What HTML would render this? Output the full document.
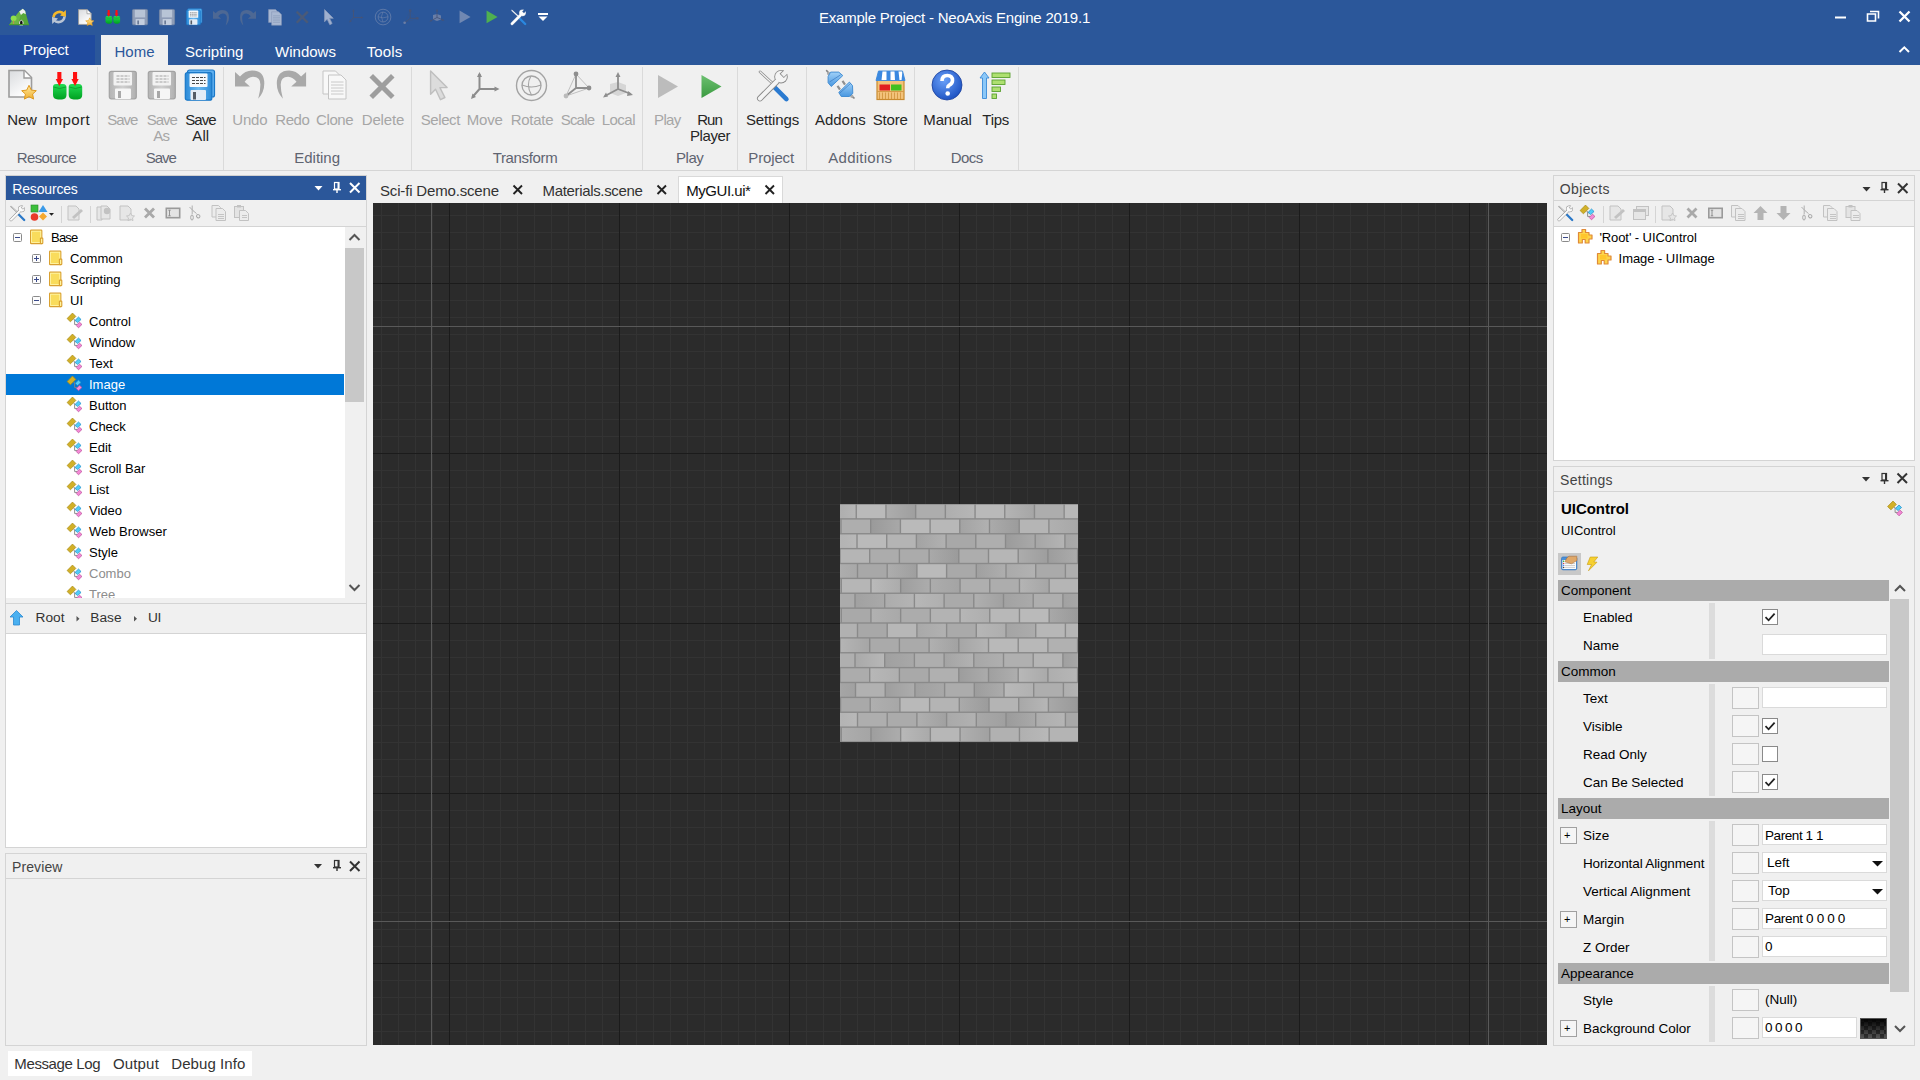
<!DOCTYPE html>
<html><head><meta charset="utf-8"><style>
html,body{margin:0;padding:0;}
body{width:1920px;height:1080px;position:relative;overflow:hidden;background:#f0f0f0;font-family:"Liberation Sans",sans-serif;}
body>div,body>svg{position:absolute;}
.t{white-space:nowrap;}
</style></head><body>
<div style="left:0px;top:0px;width:1920px;height:65px;background:#2b579a;"></div>
<div class="t" style="left:819px;top:8.5px;font-size:15px;line-height:18px;color:#fff;letter-spacing:-0.213px;">Example Project - NeoAxis Engine 2019.1</div>
<div style="left:0px;top:35px;width:95px;height:30px;background:#1f4a9e;"></div>
<div class="t" style="left:23px;top:40.5px;font-size:15px;line-height:18px;color:#fff;letter-spacing:-0.155px;">Project</div>
<div style="left:101px;top:35px;width:67px;height:30px;background:#f0f0f0;"></div>
<div class="t" style="left:114.5px;top:42.5px;font-size:15px;line-height:18px;color:#2b579a;letter-spacing:0.022px;">Home</div>
<div class="t" style="left:185px;top:42.5px;font-size:15px;line-height:18px;color:#fff;letter-spacing:-0.007px;">Scripting</div>
<div class="t" style="left:275px;top:42.5px;font-size:15px;line-height:18px;color:#fff;letter-spacing:0.021px;">Windows</div>
<div class="t" style="left:366.7px;top:42.5px;font-size:15px;line-height:18px;color:#fff;letter-spacing:0.137px;">Tools</div>
<div style="left:0px;top:65px;width:1920px;height:105px;background:#f0f0f0;"></div>
<div style="left:0px;top:170px;width:1920px;height:1px;background:#d5d5d5;"></div>
<div style="left:97px;top:67px;width:1px;height:103px;background:#dadada;"></div>
<div style="left:223px;top:67px;width:1px;height:103px;background:#dadada;"></div>
<div style="left:411px;top:67px;width:1px;height:103px;background:#dadada;"></div>
<div style="left:642px;top:67px;width:1px;height:103px;background:#dadada;"></div>
<div style="left:737px;top:67px;width:1px;height:103px;background:#dadada;"></div>
<div style="left:806px;top:67px;width:1px;height:103px;background:#dadada;"></div>
<div style="left:914px;top:67px;width:1px;height:103px;background:#dadada;"></div>
<div style="left:1018px;top:67px;width:1px;height:103px;background:#dadada;"></div>
<div class="t" style="left:7.3px;top:111.0px;font-size:15px;line-height:18px;color:#262626;letter-spacing:-0.202px;">New</div>
<div class="t" style="left:45px;top:111.0px;font-size:15px;line-height:18px;color:#262626;letter-spacing:0.415px;">Import</div>
<div class="t" style="left:107.3px;top:111.0px;font-size:15px;line-height:18px;color:#a6a6a6;letter-spacing:-1.047px;">Save</div>
<div class="t" style="left:146.7px;top:111.0px;font-size:15px;line-height:18px;color:#a6a6a6;letter-spacing:-1.047px;">Save</div>
<div class="t" style="left:185.3px;top:111.0px;font-size:15px;line-height:18px;color:#262626;letter-spacing:-0.947px;">Save</div>
<div class="t" style="left:232.3px;top:111.0px;font-size:15px;line-height:18px;color:#a6a6a6;letter-spacing:-0.215px;">Undo</div>
<div class="t" style="left:275.3px;top:111.0px;font-size:15px;line-height:18px;color:#a6a6a6;letter-spacing:-0.465px;">Redo</div>
<div class="t" style="left:316px;top:111.0px;font-size:15px;line-height:18px;color:#a6a6a6;letter-spacing:-0.378px;">Clone</div>
<div class="t" style="left:361.7px;top:111.0px;font-size:15px;line-height:18px;color:#a6a6a6;letter-spacing:-0.127px;">Delete</div>
<div class="t" style="left:420.7px;top:111.0px;font-size:15px;line-height:18px;color:#a6a6a6;letter-spacing:-0.398px;">Select</div>
<div class="t" style="left:466.7px;top:111.0px;font-size:15px;line-height:18px;color:#a6a6a6;letter-spacing:-0.170px;">Move</div>
<div class="t" style="left:510.7px;top:111.0px;font-size:15px;line-height:18px;color:#a6a6a6;letter-spacing:-0.266px;">Rotate</div>
<div class="t" style="left:560.7px;top:111.0px;font-size:15px;line-height:18px;color:#a6a6a6;letter-spacing:-0.784px;">Scale</div>
<div class="t" style="left:601.7px;top:111.0px;font-size:15px;line-height:18px;color:#a6a6a6;letter-spacing:-0.512px;">Local</div>
<div class="t" style="left:654px;top:111.0px;font-size:15px;line-height:18px;color:#a6a6a6;letter-spacing:-0.620px;">Play</div>
<div class="t" style="left:697.3px;top:111.0px;font-size:15px;line-height:18px;color:#262626;letter-spacing:-1.039px;">Run</div>
<div class="t" style="left:746px;top:111.0px;font-size:15px;line-height:18px;color:#262626;letter-spacing:-0.150px;">Settings</div>
<div class="t" style="left:815px;top:111.0px;font-size:15px;line-height:18px;color:#262626;letter-spacing:-0.029px;">Addons</div>
<div class="t" style="left:872.7px;top:111.0px;font-size:15px;line-height:18px;color:#262626;letter-spacing:-0.170px;">Store</div>
<div class="t" style="left:923.3px;top:111.0px;font-size:15px;line-height:18px;color:#262626;letter-spacing:-0.133px;">Manual</div>
<div class="t" style="left:982.3px;top:111.0px;font-size:15px;line-height:18px;color:#262626;letter-spacing:-0.270px;">Tips</div>
<div class="t" style="left:153.3px;top:127.0px;font-size:15px;line-height:18px;color:#a6a6a6;letter-spacing:-0.902px;">As</div>
<div class="t" style="left:192.3px;top:127.0px;font-size:15px;line-height:18px;color:#262626;letter-spacing:0.110px;">All</div>
<div class="t" style="left:690px;top:127.0px;font-size:15px;line-height:18px;color:#262626;letter-spacing:-0.420px;">Player</div>
<div class="t" style="left:16.7px;top:148.5px;font-size:15px;line-height:18px;color:#5f6470;letter-spacing:-0.612px;">Resource</div>
<div class="t" style="left:145.7px;top:148.5px;font-size:15px;line-height:18px;color:#5f6470;letter-spacing:-1.047px;">Save</div>
<div class="t" style="left:294.3px;top:148.5px;font-size:15px;line-height:18px;color:#5f6470;letter-spacing:-0.023px;">Editing</div>
<div class="t" style="left:492.7px;top:148.5px;font-size:15px;line-height:18px;color:#5f6470;letter-spacing:-0.354px;">Transform</div>
<div class="t" style="left:676px;top:148.5px;font-size:15px;line-height:18px;color:#5f6470;letter-spacing:-0.470px;">Play</div>
<div class="t" style="left:748.3px;top:148.5px;font-size:15px;line-height:18px;color:#5f6470;letter-spacing:-0.141px;">Project</div>
<div class="t" style="left:828.3px;top:148.5px;font-size:15px;line-height:18px;color:#5f6470;letter-spacing:0.255px;">Additions</div>
<div class="t" style="left:950.7px;top:148.5px;font-size:15px;line-height:18px;color:#5f6470;letter-spacing:-0.544px;">Docs</div>
<div style="left:5px;top:175px;width:362px;height:1px;background:#d0d0d0;"></div>
<div style="left:6px;top:176px;width:360px;height:24px;background:#2b579a;"></div>
<div class="t" style="left:12.3px;top:180.5px;font-size:14px;line-height:17px;color:#fff;letter-spacing:-0.169px;">Resources</div>
<div style="left:5px;top:176px;width:1px;height:672px;background:#d4d4d4;"></div>
<div style="left:366px;top:176px;width:1px;height:672px;background:#d4d4d4;"></div>
<div style="left:6px;top:226px;width:360px;height:1px;background:#d4d4d4;"></div>
<div style="left:6px;top:227px;width:339px;height:371px;background:#fff;"></div>
<div style="left:345px;top:227px;width:21px;height:371px;background:#f0f0f0;"></div>
<div style="left:345px;top:248px;width:19px;height:154px;background:#c8c8c8;"></div>
<div style="left:6px;top:603px;width:360px;height:1px;background:#d4d4d4;"></div>
<div style="left:6px;top:633px;width:360px;height:1px;background:#d4d4d4;"></div>
<div style="left:6px;top:634px;width:360px;height:213px;background:#fff;"></div>
<div style="left:5px;top:847px;width:362px;height:1px;background:#d4d4d4;"></div>
<div style="left:6px;top:374px;width:338px;height:21px;background:#0078d7;"></div>
<div style="left:6px;top:227px;width:339px;height:371px;overflow:hidden;">
<div class="t" style="left:45px;top:2.5px;font-size:13px;line-height:16px;color:#000;letter-spacing:-0.783px;position:absolute;">Base</div>
<div class="t" style="left:64px;top:23.5px;font-size:13px;line-height:16px;color:#000;position:absolute;">Common</div>
<div class="t" style="left:64px;top:44.5px;font-size:13px;line-height:16px;color:#000;position:absolute;">Scripting</div>
<div class="t" style="left:64px;top:65.5px;font-size:13px;line-height:16px;color:#000;position:absolute;">UI</div>
<div class="t" style="left:83px;top:86.5px;font-size:13px;line-height:16px;color:#000;position:absolute;">Control</div>
<div class="t" style="left:83px;top:107.5px;font-size:13px;line-height:16px;color:#000;position:absolute;">Window</div>
<div class="t" style="left:83px;top:128.5px;font-size:13px;line-height:16px;color:#000;position:absolute;">Text</div>
<div class="t" style="left:83px;top:149.5px;font-size:13px;line-height:16px;color:#fff;position:absolute;">Image</div>
<div class="t" style="left:83px;top:170.5px;font-size:13px;line-height:16px;color:#000;position:absolute;">Button</div>
<div class="t" style="left:83px;top:191.5px;font-size:13px;line-height:16px;color:#000;position:absolute;">Check</div>
<div class="t" style="left:83px;top:212.5px;font-size:13px;line-height:16px;color:#000;position:absolute;">Edit</div>
<div class="t" style="left:83px;top:233.5px;font-size:13px;line-height:16px;color:#000;position:absolute;">Scroll Bar</div>
<div class="t" style="left:83px;top:254.5px;font-size:13px;line-height:16px;color:#000;position:absolute;">List</div>
<div class="t" style="left:83px;top:275.5px;font-size:13px;line-height:16px;color:#000;position:absolute;">Video</div>
<div class="t" style="left:83px;top:296.5px;font-size:13px;line-height:16px;color:#000;position:absolute;">Web Browser</div>
<div class="t" style="left:83px;top:317.5px;font-size:13px;line-height:16px;color:#000;position:absolute;">Style</div>
<div class="t" style="left:83px;top:338.5px;font-size:13px;line-height:16px;color:#8d8d8d;position:absolute;">Combo</div>
<div class="t" style="left:83px;top:359.5px;font-size:13px;line-height:16px;color:#8d8d8d;position:absolute;">Tree</div>
</div>
<div class="t" style="left:35.5px;top:610.0px;font-size:13.7px;line-height:16px;color:#333;letter-spacing:0.022px;">Root</div>
<div class="t" style="left:90.3px;top:610.0px;font-size:13.7px;line-height:16px;color:#333;letter-spacing:0.001px;">Base</div>
<div class="t" style="left:148.1px;top:610.0px;font-size:13.7px;line-height:16px;color:#333;letter-spacing:-0.494px;">UI</div>
<div style="left:5px;top:853px;width:362px;height:1px;background:#d4d4d4;"></div>
<div style="left:5px;top:853px;width:1px;height:193px;background:#d4d4d4;"></div>
<div style="left:366px;top:853px;width:1px;height:193px;background:#d4d4d4;"></div>
<div style="left:5px;top:878px;width:362px;height:1px;background:#d4d4d4;"></div>
<div style="left:5px;top:1045px;width:362px;height:1px;background:#d4d4d4;"></div>
<div class="t" style="left:12px;top:858.5px;font-size:14px;line-height:17px;color:#444;letter-spacing:0.101px;">Preview</div>
<div style="left:8px;top:1051px;width:244px;height:25px;background:#fff;"></div>
<div class="t" style="left:14.3px;top:1054.5px;font-size:15px;line-height:18px;color:#333;letter-spacing:-0.378px;">Message Log</div>
<div class="t" style="left:112.9px;top:1054.5px;font-size:15px;line-height:18px;color:#333;letter-spacing:0.178px;">Output</div>
<div class="t" style="left:171.3px;top:1054.5px;font-size:15px;line-height:18px;color:#333;letter-spacing:0.061px;">Debug Info</div>
<div style="left:678px;top:176px;width:105px;height:27px;background:#fff;box-sizing:border-box;border:1px solid #d9d9d9;border-bottom:none;"></div>
<div class="t" style="left:380px;top:181.5px;font-size:15px;line-height:18px;color:#333;letter-spacing:-0.171px;">Sci-fi Demo.scene</div>
<div class="t" style="left:542.5px;top:181.5px;font-size:15px;line-height:18px;color:#333;letter-spacing:-0.336px;">Materials.scene</div>
<div class="t" style="left:686.2px;top:181.5px;font-size:15px;line-height:18px;color:#111;letter-spacing:-0.449px;">MyGUI.ui*</div>
<svg style="left:373px;top:203px;shape-rendering:crispEdges;" width="1174" height="842" viewBox="0 0 1174 842"><rect x="0" y="0" width="1174" height="842" fill="#2b2b2b"/><rect x="8" y="0" width="1" height="842" fill="#333333"/><rect x="25" y="0" width="1" height="842" fill="#333333"/><rect x="42" y="0" width="1" height="842" fill="#333333"/><rect x="59" y="0" width="1" height="842" fill="#333333"/><rect x="76" y="0" width="1" height="842" fill="#333333"/><rect x="93" y="0" width="1" height="842" fill="#333333"/><rect x="110" y="0" width="1" height="842" fill="#333333"/><rect x="127" y="0" width="1" height="842" fill="#333333"/><rect x="144" y="0" width="1" height="842" fill="#333333"/><rect x="161" y="0" width="1" height="842" fill="#333333"/><rect x="178" y="0" width="1" height="842" fill="#333333"/><rect x="195" y="0" width="1" height="842" fill="#333333"/><rect x="212" y="0" width="1" height="842" fill="#333333"/><rect x="229" y="0" width="1" height="842" fill="#333333"/><rect x="246" y="0" width="1" height="842" fill="#333333"/><rect x="263" y="0" width="1" height="842" fill="#333333"/><rect x="280" y="0" width="1" height="842" fill="#333333"/><rect x="297" y="0" width="1" height="842" fill="#333333"/><rect x="314" y="0" width="1" height="842" fill="#333333"/><rect x="331" y="0" width="1" height="842" fill="#333333"/><rect x="348" y="0" width="1" height="842" fill="#333333"/><rect x="365" y="0" width="1" height="842" fill="#333333"/><rect x="382" y="0" width="1" height="842" fill="#333333"/><rect x="399" y="0" width="1" height="842" fill="#333333"/><rect x="416" y="0" width="1" height="842" fill="#333333"/><rect x="433" y="0" width="1" height="842" fill="#333333"/><rect x="450" y="0" width="1" height="842" fill="#333333"/><rect x="467" y="0" width="1" height="842" fill="#333333"/><rect x="484" y="0" width="1" height="842" fill="#333333"/><rect x="501" y="0" width="1" height="842" fill="#333333"/><rect x="518" y="0" width="1" height="842" fill="#333333"/><rect x="535" y="0" width="1" height="842" fill="#333333"/><rect x="552" y="0" width="1" height="842" fill="#333333"/><rect x="569" y="0" width="1" height="842" fill="#333333"/><rect x="586" y="0" width="1" height="842" fill="#333333"/><rect x="603" y="0" width="1" height="842" fill="#333333"/><rect x="620" y="0" width="1" height="842" fill="#333333"/><rect x="637" y="0" width="1" height="842" fill="#333333"/><rect x="654" y="0" width="1" height="842" fill="#333333"/><rect x="671" y="0" width="1" height="842" fill="#333333"/><rect x="688" y="0" width="1" height="842" fill="#333333"/><rect x="705" y="0" width="1" height="842" fill="#333333"/><rect x="722" y="0" width="1" height="842" fill="#333333"/><rect x="739" y="0" width="1" height="842" fill="#333333"/><rect x="756" y="0" width="1" height="842" fill="#333333"/><rect x="773" y="0" width="1" height="842" fill="#333333"/><rect x="790" y="0" width="1" height="842" fill="#333333"/><rect x="807" y="0" width="1" height="842" fill="#333333"/><rect x="824" y="0" width="1" height="842" fill="#333333"/><rect x="841" y="0" width="1" height="842" fill="#333333"/><rect x="858" y="0" width="1" height="842" fill="#333333"/><rect x="875" y="0" width="1" height="842" fill="#333333"/><rect x="892" y="0" width="1" height="842" fill="#333333"/><rect x="909" y="0" width="1" height="842" fill="#333333"/><rect x="926" y="0" width="1" height="842" fill="#333333"/><rect x="943" y="0" width="1" height="842" fill="#333333"/><rect x="960" y="0" width="1" height="842" fill="#333333"/><rect x="977" y="0" width="1" height="842" fill="#333333"/><rect x="994" y="0" width="1" height="842" fill="#333333"/><rect x="1011" y="0" width="1" height="842" fill="#333333"/><rect x="1028" y="0" width="1" height="842" fill="#333333"/><rect x="1045" y="0" width="1" height="842" fill="#333333"/><rect x="1062" y="0" width="1" height="842" fill="#333333"/><rect x="1079" y="0" width="1" height="842" fill="#333333"/><rect x="1096" y="0" width="1" height="842" fill="#333333"/><rect x="1113" y="0" width="1" height="842" fill="#333333"/><rect x="1130" y="0" width="1" height="842" fill="#333333"/><rect x="1147" y="0" width="1" height="842" fill="#333333"/><rect x="1164" y="0" width="1" height="842" fill="#333333"/><rect x="0" y="12" width="1174" height="1" fill="#333333"/><rect x="0" y="29" width="1174" height="1" fill="#333333"/><rect x="0" y="46" width="1174" height="1" fill="#333333"/><rect x="0" y="63" width="1174" height="1" fill="#333333"/><rect x="0" y="80" width="1174" height="1" fill="#333333"/><rect x="0" y="97" width="1174" height="1" fill="#333333"/><rect x="0" y="114" width="1174" height="1" fill="#333333"/><rect x="0" y="131" width="1174" height="1" fill="#333333"/><rect x="0" y="148" width="1174" height="1" fill="#333333"/><rect x="0" y="165" width="1174" height="1" fill="#333333"/><rect x="0" y="182" width="1174" height="1" fill="#333333"/><rect x="0" y="199" width="1174" height="1" fill="#333333"/><rect x="0" y="216" width="1174" height="1" fill="#333333"/><rect x="0" y="233" width="1174" height="1" fill="#333333"/><rect x="0" y="250" width="1174" height="1" fill="#333333"/><rect x="0" y="267" width="1174" height="1" fill="#333333"/><rect x="0" y="284" width="1174" height="1" fill="#333333"/><rect x="0" y="301" width="1174" height="1" fill="#333333"/><rect x="0" y="318" width="1174" height="1" fill="#333333"/><rect x="0" y="335" width="1174" height="1" fill="#333333"/><rect x="0" y="352" width="1174" height="1" fill="#333333"/><rect x="0" y="369" width="1174" height="1" fill="#333333"/><rect x="0" y="386" width="1174" height="1" fill="#333333"/><rect x="0" y="403" width="1174" height="1" fill="#333333"/><rect x="0" y="420" width="1174" height="1" fill="#333333"/><rect x="0" y="437" width="1174" height="1" fill="#333333"/><rect x="0" y="454" width="1174" height="1" fill="#333333"/><rect x="0" y="471" width="1174" height="1" fill="#333333"/><rect x="0" y="488" width="1174" height="1" fill="#333333"/><rect x="0" y="505" width="1174" height="1" fill="#333333"/><rect x="0" y="522" width="1174" height="1" fill="#333333"/><rect x="0" y="539" width="1174" height="1" fill="#333333"/><rect x="0" y="556" width="1174" height="1" fill="#333333"/><rect x="0" y="573" width="1174" height="1" fill="#333333"/><rect x="0" y="590" width="1174" height="1" fill="#333333"/><rect x="0" y="607" width="1174" height="1" fill="#333333"/><rect x="0" y="624" width="1174" height="1" fill="#333333"/><rect x="0" y="641" width="1174" height="1" fill="#333333"/><rect x="0" y="658" width="1174" height="1" fill="#333333"/><rect x="0" y="675" width="1174" height="1" fill="#333333"/><rect x="0" y="692" width="1174" height="1" fill="#333333"/><rect x="0" y="709" width="1174" height="1" fill="#333333"/><rect x="0" y="726" width="1174" height="1" fill="#333333"/><rect x="0" y="743" width="1174" height="1" fill="#333333"/><rect x="0" y="760" width="1174" height="1" fill="#333333"/><rect x="0" y="777" width="1174" height="1" fill="#333333"/><rect x="0" y="794" width="1174" height="1" fill="#333333"/><rect x="0" y="811" width="1174" height="1" fill="#333333"/><rect x="0" y="828" width="1174" height="1" fill="#333333"/><rect x="76" y="0" width="1" height="842" fill="#1b1b1b"/><rect x="246" y="0" width="1" height="842" fill="#1b1b1b"/><rect x="416" y="0" width="1" height="842" fill="#1b1b1b"/><rect x="586" y="0" width="1" height="842" fill="#1b1b1b"/><rect x="756" y="0" width="1" height="842" fill="#1b1b1b"/><rect x="926" y="0" width="1" height="842" fill="#1b1b1b"/><rect x="1096" y="0" width="1" height="842" fill="#1b1b1b"/><rect x="0" y="80" width="1174" height="1" fill="#1b1b1b"/><rect x="0" y="250" width="1174" height="1" fill="#1b1b1b"/><rect x="0" y="420" width="1174" height="1" fill="#1b1b1b"/><rect x="0" y="590" width="1174" height="1" fill="#1b1b1b"/><rect x="0" y="760" width="1174" height="1" fill="#1b1b1b"/><rect x="58" y="0" width="1" height="842" fill="#595959"/><rect x="1115" y="0" width="1" height="842" fill="#595959"/><rect x="0" y="123" width="1174" height="1" fill="#595959"/><rect x="0" y="718" width="1174" height="1" fill="#595959"/></svg>
<svg style="left:840px;top:504px;" width="238" height="238" viewBox="0 0 238 238"><rect x="0" y="0" width="238" height="238" fill="#8a8a8a"/><linearGradient id="bg0_-134"><stop offset="0" stop-color="rgb(168,168,168)"/><stop offset="1" stop-color="rgb(182,182,182)"/></linearGradient><rect x="-12.75" y="0.70" width="28.30" height="13.47" fill="url(#bg0_-134)"/><rect x="16.95" y="0.70" width="28.30" height="13.47" fill="rgb(186,186,186)"/><linearGradient id="bg0_459"><stop offset="0" stop-color="rgb(173,173,173)"/><stop offset="1" stop-color="rgb(159,159,159)"/></linearGradient><rect x="46.65" y="0.70" width="28.30" height="13.47" fill="url(#bg0_459)"/><rect x="76.35" y="0.70" width="28.30" height="13.47" fill="rgb(173,173,173)"/><linearGradient id="bg0_1053"><stop offset="0" stop-color="rgb(174,174,174)"/><stop offset="1" stop-color="rgb(182,182,182)"/></linearGradient><rect x="106.05" y="0.70" width="28.30" height="13.47" fill="url(#bg0_1053)"/><rect x="135.75" y="0.70" width="28.30" height="13.47" fill="rgb(185,185,185)"/><linearGradient id="bg0_1647"><stop offset="0" stop-color="rgb(180,180,180)"/><stop offset="1" stop-color="rgb(166,166,166)"/></linearGradient><rect x="165.45" y="0.70" width="28.30" height="13.47" fill="url(#bg0_1647)"/><rect x="195.15" y="0.70" width="28.30" height="13.47" fill="rgb(173,173,173)"/><rect x="224.85" y="0.70" width="28.30" height="13.47" fill="rgb(184,184,184)"/><rect x="-28.00" y="15.57" width="28.30" height="13.47" fill="rgb(169,169,169)"/><rect x="1.70" y="15.57" width="28.30" height="13.47" fill="rgb(174,174,174)"/><linearGradient id="bg1_307"><stop offset="0" stop-color="rgb(154,154,154)"/><stop offset="1" stop-color="rgb(168,168,168)"/></linearGradient><rect x="31.40" y="15.57" width="28.30" height="13.47" fill="url(#bg1_307)"/><rect x="61.10" y="15.57" width="28.30" height="13.47" fill="rgb(186,186,186)"/><rect x="90.80" y="15.57" width="28.30" height="13.47" fill="rgb(184,184,184)"/><linearGradient id="bg1_1198"><stop offset="0" stop-color="rgb(163,163,163)"/><stop offset="1" stop-color="rgb(177,177,177)"/></linearGradient><rect x="120.50" y="15.57" width="28.30" height="13.47" fill="url(#bg1_1198)"/><linearGradient id="bg1_1495"><stop offset="0" stop-color="rgb(170,170,170)"/><stop offset="1" stop-color="rgb(156,156,156)"/></linearGradient><rect x="150.20" y="15.57" width="28.30" height="13.47" fill="url(#bg1_1495)"/><rect x="179.90" y="15.57" width="28.30" height="13.47" fill="rgb(181,181,181)"/><linearGradient id="bg1_2089"><stop offset="0" stop-color="rgb(176,176,176)"/><stop offset="1" stop-color="rgb(168,168,168)"/></linearGradient><rect x="209.60" y="15.57" width="28.30" height="13.47" fill="url(#bg1_2089)"/><linearGradient id="bg2_-127"><stop offset="0" stop-color="rgb(176,176,176)"/><stop offset="1" stop-color="rgb(184,184,184)"/></linearGradient><rect x="-12.00" y="30.45" width="28.30" height="13.47" fill="url(#bg2_-127)"/><rect x="17.70" y="30.45" width="28.30" height="13.47" fill="rgb(186,186,186)"/><rect x="47.40" y="30.45" width="28.30" height="13.47" fill="rgb(180,180,180)"/><linearGradient id="bg2_764"><stop offset="0" stop-color="rgb(163,163,163)"/><stop offset="1" stop-color="rgb(177,177,177)"/></linearGradient><rect x="77.10" y="30.45" width="28.30" height="13.47" fill="url(#bg2_764)"/><rect x="106.80" y="30.45" width="28.30" height="13.47" fill="rgb(168,168,168)"/><rect x="136.50" y="30.45" width="28.30" height="13.47" fill="rgb(174,174,174)"/><linearGradient id="bg2_1655"><stop offset="0" stop-color="rgb(155,155,155)"/><stop offset="1" stop-color="rgb(169,169,169)"/></linearGradient><rect x="166.20" y="30.45" width="28.30" height="13.47" fill="url(#bg2_1655)"/><linearGradient id="bg2_1952"><stop offset="0" stop-color="rgb(166,166,166)"/><stop offset="1" stop-color="rgb(180,180,180)"/></linearGradient><rect x="195.90" y="30.45" width="28.30" height="13.47" fill="url(#bg2_1952)"/><linearGradient id="bg2_2249"><stop offset="0" stop-color="rgb(166,166,166)"/><stop offset="1" stop-color="rgb(174,174,174)"/></linearGradient><rect x="225.60" y="30.45" width="28.30" height="13.47" fill="url(#bg2_2249)"/><linearGradient id="bg3_-297"><stop offset="0" stop-color="rgb(169,169,169)"/><stop offset="1" stop-color="rgb(177,177,177)"/></linearGradient><rect x="-29.00" y="45.33" width="28.30" height="13.47" fill="url(#bg3_-297)"/><rect x="0.70" y="45.33" width="28.30" height="13.47" fill="rgb(181,181,181)"/><rect x="30.40" y="45.33" width="28.30" height="13.47" fill="rgb(172,172,172)"/><rect x="60.10" y="45.33" width="28.30" height="13.47" fill="rgb(171,171,171)"/><linearGradient id="bg3_891"><stop offset="0" stop-color="rgb(169,169,169)"/><stop offset="1" stop-color="rgb(155,155,155)"/></linearGradient><rect x="89.80" y="45.33" width="28.30" height="13.47" fill="url(#bg3_891)"/><rect x="119.50" y="45.33" width="28.30" height="13.47" fill="rgb(173,173,173)"/><rect x="149.20" y="45.33" width="28.30" height="13.47" fill="rgb(182,182,182)"/><linearGradient id="bg3_1782"><stop offset="0" stop-color="rgb(172,172,172)"/><stop offset="1" stop-color="rgb(158,158,158)"/></linearGradient><rect x="178.90" y="45.33" width="28.30" height="13.47" fill="url(#bg3_1782)"/><linearGradient id="bg3_2079"><stop offset="0" stop-color="rgb(157,157,157)"/><stop offset="1" stop-color="rgb(171,171,171)"/></linearGradient><rect x="208.60" y="45.33" width="28.30" height="13.47" fill="url(#bg3_2079)"/><rect x="238.30" y="45.33" width="28.30" height="13.47" fill="rgb(174,174,174)"/><linearGradient id="bg4_-122"><stop offset="0" stop-color="rgb(176,176,176)"/><stop offset="1" stop-color="rgb(168,168,168)"/></linearGradient><rect x="-11.50" y="60.20" width="28.30" height="13.47" fill="url(#bg4_-122)"/><rect x="18.20" y="60.20" width="28.30" height="13.47" fill="rgb(168,168,168)"/><linearGradient id="bg4_472"><stop offset="0" stop-color="rgb(173,173,173)"/><stop offset="1" stop-color="rgb(159,159,159)"/></linearGradient><rect x="47.90" y="60.20" width="28.30" height="13.47" fill="url(#bg4_472)"/><rect x="77.60" y="60.20" width="28.30" height="13.47" fill="rgb(186,186,186)"/><rect x="107.30" y="60.20" width="28.30" height="13.47" fill="rgb(169,169,169)"/><linearGradient id="bg4_1363"><stop offset="0" stop-color="rgb(160,160,160)"/><stop offset="1" stop-color="rgb(174,174,174)"/></linearGradient><rect x="137.00" y="60.20" width="28.30" height="13.47" fill="url(#bg4_1363)"/><linearGradient id="bg4_1660"><stop offset="0" stop-color="rgb(170,170,170)"/><stop offset="1" stop-color="rgb(178,178,178)"/></linearGradient><rect x="166.70" y="60.20" width="28.30" height="13.47" fill="url(#bg4_1660)"/><rect x="196.40" y="60.20" width="28.30" height="13.47" fill="rgb(170,170,170)"/><rect x="226.10" y="60.20" width="28.30" height="13.47" fill="rgb(174,174,174)"/><linearGradient id="bg5_-284"><stop offset="0" stop-color="rgb(160,160,160)"/><stop offset="1" stop-color="rgb(168,168,168)"/></linearGradient><rect x="-27.75" y="75.08" width="28.30" height="13.47" fill="url(#bg5_-284)"/><rect x="1.95" y="75.08" width="28.30" height="13.47" fill="rgb(182,182,182)"/><linearGradient id="bg5_309"><stop offset="0" stop-color="rgb(186,186,186)"/><stop offset="1" stop-color="rgb(172,172,172)"/></linearGradient><rect x="31.65" y="75.08" width="28.30" height="13.47" fill="url(#bg5_309)"/><linearGradient id="bg5_606"><stop offset="0" stop-color="rgb(158,158,158)"/><stop offset="1" stop-color="rgb(172,172,172)"/></linearGradient><rect x="61.35" y="75.08" width="28.30" height="13.47" fill="url(#bg5_606)"/><linearGradient id="bg5_903"><stop offset="0" stop-color="rgb(172,172,172)"/><stop offset="1" stop-color="rgb(164,164,164)"/></linearGradient><rect x="91.05" y="75.08" width="28.30" height="13.47" fill="url(#bg5_903)"/><rect x="120.75" y="75.08" width="28.30" height="13.47" fill="rgb(175,175,175)"/><rect x="150.45" y="75.08" width="28.30" height="13.47" fill="rgb(173,173,173)"/><linearGradient id="bg5_1794"><stop offset="0" stop-color="rgb(180,180,180)"/><stop offset="1" stop-color="rgb(166,166,166)"/></linearGradient><rect x="180.15" y="75.08" width="28.30" height="13.47" fill="url(#bg5_1794)"/><rect x="209.85" y="75.08" width="28.30" height="13.47" fill="rgb(181,181,181)"/><rect x="-14.00" y="89.95" width="28.30" height="13.47" fill="rgb(171,171,171)"/><linearGradient id="bg6_150"><stop offset="0" stop-color="rgb(161,161,161)"/><stop offset="1" stop-color="rgb(169,169,169)"/></linearGradient><rect x="15.70" y="89.95" width="28.30" height="13.47" fill="url(#bg6_150)"/><linearGradient id="bg6_447"><stop offset="0" stop-color="rgb(172,172,172)"/><stop offset="1" stop-color="rgb(180,180,180)"/></linearGradient><rect x="45.40" y="89.95" width="28.30" height="13.47" fill="url(#bg6_447)"/><linearGradient id="bg6_744"><stop offset="0" stop-color="rgb(183,183,183)"/><stop offset="1" stop-color="rgb(175,175,175)"/></linearGradient><rect x="75.10" y="89.95" width="28.30" height="13.47" fill="url(#bg6_744)"/><rect x="104.80" y="89.95" width="28.30" height="13.47" fill="rgb(170,170,170)"/><linearGradient id="bg6_1338"><stop offset="0" stop-color="rgb(175,175,175)"/><stop offset="1" stop-color="rgb(161,161,161)"/></linearGradient><rect x="134.50" y="89.95" width="28.30" height="13.47" fill="url(#bg6_1338)"/><linearGradient id="bg6_1635"><stop offset="0" stop-color="rgb(162,162,162)"/><stop offset="1" stop-color="rgb(170,170,170)"/></linearGradient><rect x="164.20" y="89.95" width="28.30" height="13.47" fill="url(#bg6_1635)"/><rect x="193.90" y="89.95" width="28.30" height="13.47" fill="rgb(174,174,174)"/><linearGradient id="bg6_2229"><stop offset="0" stop-color="rgb(162,162,162)"/><stop offset="1" stop-color="rgb(170,170,170)"/></linearGradient><rect x="223.60" y="89.95" width="28.30" height="13.47" fill="url(#bg6_2229)"/><rect x="-27.75" y="104.83" width="28.30" height="13.47" fill="rgb(175,175,175)"/><rect x="1.95" y="104.83" width="28.30" height="13.47" fill="rgb(169,169,169)"/><linearGradient id="bg7_309"><stop offset="0" stop-color="rgb(177,177,177)"/><stop offset="1" stop-color="rgb(169,169,169)"/></linearGradient><rect x="31.65" y="104.83" width="28.30" height="13.47" fill="url(#bg7_309)"/><rect x="61.35" y="104.83" width="28.30" height="13.47" fill="rgb(172,172,172)"/><rect x="91.05" y="104.83" width="28.30" height="13.47" fill="rgb(179,179,179)"/><linearGradient id="bg7_1200"><stop offset="0" stop-color="rgb(182,182,182)"/><stop offset="1" stop-color="rgb(174,174,174)"/></linearGradient><rect x="120.75" y="104.83" width="28.30" height="13.47" fill="url(#bg7_1200)"/><rect x="150.45" y="104.83" width="28.30" height="13.47" fill="rgb(184,184,184)"/><rect x="180.15" y="104.83" width="28.30" height="13.47" fill="rgb(186,186,186)"/><linearGradient id="bg7_2091"><stop offset="0" stop-color="rgb(168,168,168)"/><stop offset="1" stop-color="rgb(154,154,154)"/></linearGradient><rect x="209.85" y="104.83" width="28.30" height="13.47" fill="url(#bg7_2091)"/><rect x="-11.50" y="119.70" width="28.30" height="13.47" fill="rgb(177,177,177)"/><rect x="18.20" y="119.70" width="28.30" height="13.47" fill="rgb(168,168,168)"/><rect x="47.90" y="119.70" width="28.30" height="13.47" fill="rgb(183,183,183)"/><linearGradient id="bg8_769"><stop offset="0" stop-color="rgb(169,169,169)"/><stop offset="1" stop-color="rgb(177,177,177)"/></linearGradient><rect x="77.60" y="119.70" width="28.30" height="13.47" fill="url(#bg8_769)"/><rect x="107.30" y="119.70" width="28.30" height="13.47" fill="rgb(170,170,170)"/><linearGradient id="bg8_1363"><stop offset="0" stop-color="rgb(182,182,182)"/><stop offset="1" stop-color="rgb(174,174,174)"/></linearGradient><rect x="137.00" y="119.70" width="28.30" height="13.47" fill="url(#bg8_1363)"/><linearGradient id="bg8_1660"><stop offset="0" stop-color="rgb(164,164,164)"/><stop offset="1" stop-color="rgb(172,172,172)"/></linearGradient><rect x="166.70" y="119.70" width="28.30" height="13.47" fill="url(#bg8_1660)"/><rect x="196.40" y="119.70" width="28.30" height="13.47" fill="rgb(183,183,183)"/><rect x="226.10" y="119.70" width="28.30" height="13.47" fill="rgb(181,181,181)"/><rect x="-29.00" y="134.57" width="28.30" height="13.47" fill="rgb(183,183,183)"/><linearGradient id="bg9_0"><stop offset="0" stop-color="rgb(180,180,180)"/><stop offset="1" stop-color="rgb(166,166,166)"/></linearGradient><rect x="0.70" y="134.57" width="28.30" height="13.47" fill="url(#bg9_0)"/><rect x="30.40" y="134.57" width="28.30" height="13.47" fill="rgb(170,170,170)"/><rect x="60.10" y="134.57" width="28.30" height="13.47" fill="rgb(170,170,170)"/><linearGradient id="bg9_891"><stop offset="0" stop-color="rgb(176,176,176)"/><stop offset="1" stop-color="rgb(162,162,162)"/></linearGradient><rect x="89.80" y="134.57" width="28.30" height="13.47" fill="url(#bg9_891)"/><linearGradient id="bg9_1188"><stop offset="0" stop-color="rgb(166,166,166)"/><stop offset="1" stop-color="rgb(180,180,180)"/></linearGradient><rect x="119.50" y="134.57" width="28.30" height="13.47" fill="url(#bg9_1188)"/><rect x="149.20" y="134.57" width="28.30" height="13.47" fill="rgb(185,185,185)"/><rect x="178.90" y="134.57" width="28.30" height="13.47" fill="rgb(184,184,184)"/><rect x="208.60" y="134.57" width="28.30" height="13.47" fill="rgb(177,177,177)"/><rect x="238.30" y="134.57" width="28.30" height="13.47" fill="rgb(183,183,183)"/><rect x="-14.00" y="149.45" width="28.30" height="13.47" fill="rgb(175,175,175)"/><linearGradient id="bg10_150"><stop offset="0" stop-color="rgb(169,169,169)"/><stop offset="1" stop-color="rgb(183,183,183)"/></linearGradient><rect x="15.70" y="149.45" width="28.30" height="13.47" fill="url(#bg10_150)"/><linearGradient id="bg10_447"><stop offset="0" stop-color="rgb(160,160,160)"/><stop offset="1" stop-color="rgb(168,168,168)"/></linearGradient><rect x="45.40" y="149.45" width="28.30" height="13.47" fill="url(#bg10_447)"/><rect x="75.10" y="149.45" width="28.30" height="13.47" fill="rgb(174,174,174)"/><linearGradient id="bg10_1041"><stop offset="0" stop-color="rgb(164,164,164)"/><stop offset="1" stop-color="rgb(178,178,178)"/></linearGradient><rect x="104.80" y="149.45" width="28.30" height="13.47" fill="url(#bg10_1041)"/><linearGradient id="bg10_1338"><stop offset="0" stop-color="rgb(167,167,167)"/><stop offset="1" stop-color="rgb(175,175,175)"/></linearGradient><rect x="134.50" y="149.45" width="28.30" height="13.47" fill="url(#bg10_1338)"/><rect x="164.20" y="149.45" width="28.30" height="13.47" fill="rgb(176,176,176)"/><rect x="193.90" y="149.45" width="28.30" height="13.47" fill="rgb(181,181,181)"/><linearGradient id="bg10_2229"><stop offset="0" stop-color="rgb(160,160,160)"/><stop offset="1" stop-color="rgb(174,174,174)"/></linearGradient><rect x="223.60" y="149.45" width="28.30" height="13.47" fill="url(#bg10_2229)"/><rect x="-29.00" y="164.32" width="28.30" height="13.47" fill="rgb(178,178,178)"/><rect x="0.70" y="164.32" width="28.30" height="13.47" fill="rgb(172,172,172)"/><linearGradient id="bg11_297"><stop offset="0" stop-color="rgb(183,183,183)"/><stop offset="1" stop-color="rgb(175,175,175)"/></linearGradient><rect x="30.40" y="164.32" width="28.30" height="13.47" fill="url(#bg11_297)"/><rect x="60.10" y="164.32" width="28.30" height="13.47" fill="rgb(169,169,169)"/><rect x="89.80" y="164.32" width="28.30" height="13.47" fill="rgb(176,176,176)"/><linearGradient id="bg11_1188"><stop offset="0" stop-color="rgb(157,157,157)"/><stop offset="1" stop-color="rgb(171,171,171)"/></linearGradient><rect x="119.50" y="164.32" width="28.30" height="13.47" fill="url(#bg11_1188)"/><linearGradient id="bg11_1485"><stop offset="0" stop-color="rgb(160,160,160)"/><stop offset="1" stop-color="rgb(174,174,174)"/></linearGradient><rect x="149.20" y="164.32" width="28.30" height="13.47" fill="url(#bg11_1485)"/><linearGradient id="bg11_1782"><stop offset="0" stop-color="rgb(184,184,184)"/><stop offset="1" stop-color="rgb(170,170,170)"/></linearGradient><rect x="178.90" y="164.32" width="28.30" height="13.47" fill="url(#bg11_1782)"/><linearGradient id="bg11_2079"><stop offset="0" stop-color="rgb(174,174,174)"/><stop offset="1" stop-color="rgb(182,182,182)"/></linearGradient><rect x="208.60" y="164.32" width="28.30" height="13.47" fill="url(#bg11_2079)"/><linearGradient id="bg11_2375"><stop offset="0" stop-color="rgb(169,169,169)"/><stop offset="1" stop-color="rgb(161,161,161)"/></linearGradient><rect x="238.30" y="164.32" width="28.30" height="13.47" fill="url(#bg11_2375)"/><linearGradient id="bg12_-142"><stop offset="0" stop-color="rgb(169,169,169)"/><stop offset="1" stop-color="rgb(161,161,161)"/></linearGradient><rect x="-13.50" y="179.20" width="28.30" height="13.47" fill="url(#bg12_-142)"/><rect x="16.20" y="179.20" width="28.30" height="13.47" fill="rgb(177,177,177)"/><linearGradient id="bg12_452"><stop offset="0" stop-color="rgb(158,158,158)"/><stop offset="1" stop-color="rgb(172,172,172)"/></linearGradient><rect x="45.90" y="179.20" width="28.30" height="13.47" fill="url(#bg12_452)"/><linearGradient id="bg12_749"><stop offset="0" stop-color="rgb(160,160,160)"/><stop offset="1" stop-color="rgb(168,168,168)"/></linearGradient><rect x="75.60" y="179.20" width="28.30" height="13.47" fill="url(#bg12_749)"/><rect x="105.30" y="179.20" width="28.30" height="13.47" fill="rgb(172,172,172)"/><linearGradient id="bg12_1343"><stop offset="0" stop-color="rgb(157,157,157)"/><stop offset="1" stop-color="rgb(171,171,171)"/></linearGradient><rect x="135.00" y="179.20" width="28.30" height="13.47" fill="url(#bg12_1343)"/><linearGradient id="bg12_1640"><stop offset="0" stop-color="rgb(185,185,185)"/><stop offset="1" stop-color="rgb(177,177,177)"/></linearGradient><rect x="164.70" y="179.20" width="28.30" height="13.47" fill="url(#bg12_1640)"/><rect x="194.40" y="179.20" width="28.30" height="13.47" fill="rgb(174,174,174)"/><linearGradient id="bg12_2234"><stop offset="0" stop-color="rgb(175,175,175)"/><stop offset="1" stop-color="rgb(183,183,183)"/></linearGradient><rect x="224.10" y="179.20" width="28.30" height="13.47" fill="url(#bg12_2234)"/><linearGradient id="bg13_-292"><stop offset="0" stop-color="rgb(168,168,168)"/><stop offset="1" stop-color="rgb(154,154,154)"/></linearGradient><rect x="-28.50" y="194.07" width="28.30" height="13.47" fill="url(#bg13_-292)"/><rect x="1.20" y="194.07" width="28.30" height="13.47" fill="rgb(169,169,169)"/><linearGradient id="bg13_302"><stop offset="0" stop-color="rgb(175,175,175)"/><stop offset="1" stop-color="rgb(167,167,167)"/></linearGradient><rect x="30.90" y="194.07" width="28.30" height="13.47" fill="url(#bg13_302)"/><rect x="60.60" y="194.07" width="28.30" height="13.47" fill="rgb(185,185,185)"/><rect x="90.30" y="194.07" width="28.30" height="13.47" fill="rgb(180,180,180)"/><linearGradient id="bg13_1193"><stop offset="0" stop-color="rgb(170,170,170)"/><stop offset="1" stop-color="rgb(156,156,156)"/></linearGradient><rect x="120.00" y="194.07" width="28.30" height="13.47" fill="url(#bg13_1193)"/><rect x="149.70" y="194.07" width="28.30" height="13.47" fill="rgb(180,180,180)"/><linearGradient id="bg13_1787"><stop offset="0" stop-color="rgb(168,168,168)"/><stop offset="1" stop-color="rgb(182,182,182)"/></linearGradient><rect x="179.40" y="194.07" width="28.30" height="13.47" fill="url(#bg13_1787)"/><linearGradient id="bg13_2084"><stop offset="0" stop-color="rgb(168,168,168)"/><stop offset="1" stop-color="rgb(154,154,154)"/></linearGradient><rect x="209.10" y="194.07" width="28.30" height="13.47" fill="url(#bg13_2084)"/><linearGradient id="bg14_-122"><stop offset="0" stop-color="rgb(176,176,176)"/><stop offset="1" stop-color="rgb(184,184,184)"/></linearGradient><rect x="-11.50" y="208.95" width="28.30" height="13.47" fill="url(#bg14_-122)"/><rect x="18.20" y="208.95" width="28.30" height="13.47" fill="rgb(174,174,174)"/><rect x="47.90" y="208.95" width="28.30" height="13.47" fill="rgb(171,171,171)"/><linearGradient id="bg14_769"><stop offset="0" stop-color="rgb(175,175,175)"/><stop offset="1" stop-color="rgb(161,161,161)"/></linearGradient><rect x="77.60" y="208.95" width="28.30" height="13.47" fill="url(#bg14_769)"/><linearGradient id="bg14_1066"><stop offset="0" stop-color="rgb(169,169,169)"/><stop offset="1" stop-color="rgb(177,177,177)"/></linearGradient><rect x="107.30" y="208.95" width="28.30" height="13.47" fill="url(#bg14_1066)"/><linearGradient id="bg14_1363"><stop offset="0" stop-color="rgb(168,168,168)"/><stop offset="1" stop-color="rgb(160,160,160)"/></linearGradient><rect x="137.00" y="208.95" width="28.30" height="13.47" fill="url(#bg14_1363)"/><linearGradient id="bg14_1660"><stop offset="0" stop-color="rgb(155,155,155)"/><stop offset="1" stop-color="rgb(169,169,169)"/></linearGradient><rect x="166.70" y="208.95" width="28.30" height="13.47" fill="url(#bg14_1660)"/><linearGradient id="bg14_1957"><stop offset="0" stop-color="rgb(173,173,173)"/><stop offset="1" stop-color="rgb(181,181,181)"/></linearGradient><rect x="196.40" y="208.95" width="28.30" height="13.47" fill="url(#bg14_1957)"/><rect x="226.10" y="208.95" width="28.30" height="13.47" fill="rgb(168,168,168)"/><linearGradient id="bg15_-284"><stop offset="0" stop-color="rgb(170,170,170)"/><stop offset="1" stop-color="rgb(156,156,156)"/></linearGradient><rect x="-27.75" y="223.82" width="28.30" height="13.47" fill="url(#bg15_-284)"/><linearGradient id="bg15_12"><stop offset="0" stop-color="rgb(173,173,173)"/><stop offset="1" stop-color="rgb(165,165,165)"/></linearGradient><rect x="1.95" y="223.82" width="28.30" height="13.47" fill="url(#bg15_12)"/><linearGradient id="bg15_309"><stop offset="0" stop-color="rgb(158,158,158)"/><stop offset="1" stop-color="rgb(172,172,172)"/></linearGradient><rect x="31.65" y="223.82" width="28.30" height="13.47" fill="url(#bg15_309)"/><linearGradient id="bg15_606"><stop offset="0" stop-color="rgb(184,184,184)"/><stop offset="1" stop-color="rgb(170,170,170)"/></linearGradient><rect x="61.35" y="223.82" width="28.30" height="13.47" fill="url(#bg15_606)"/><rect x="91.05" y="223.82" width="28.30" height="13.47" fill="rgb(183,183,183)"/><linearGradient id="bg15_1200"><stop offset="0" stop-color="rgb(175,175,175)"/><stop offset="1" stop-color="rgb(161,161,161)"/></linearGradient><rect x="120.75" y="223.82" width="28.30" height="13.47" fill="url(#bg15_1200)"/><rect x="150.45" y="223.82" width="28.30" height="13.47" fill="rgb(177,177,177)"/><linearGradient id="bg15_1794"><stop offset="0" stop-color="rgb(176,176,176)"/><stop offset="1" stop-color="rgb(184,184,184)"/></linearGradient><rect x="180.15" y="223.82" width="28.30" height="13.47" fill="url(#bg15_1794)"/><rect x="209.85" y="223.82" width="28.30" height="13.47" fill="rgb(180,180,180)"/></svg>
<div style="left:1553px;top:175px;width:362px;height:1px;background:#d4d4d4;"></div>
<div style="left:1553px;top:176px;width:1px;height:285px;background:#d4d4d4;"></div>
<div style="left:1914px;top:176px;width:1px;height:285px;background:#d4d4d4;"></div>
<div style="left:1554px;top:200px;width:360px;height:1px;background:#d4d4d4;"></div>
<div style="left:1554px;top:226px;width:360px;height:1px;background:#d4d4d4;"></div>
<div style="left:1554px;top:227px;width:360px;height:233px;background:#fff;"></div>
<div style="left:1553px;top:460px;width:362px;height:1px;background:#d4d4d4;"></div>
<div class="t" style="left:1559.8px;top:180.5px;font-size:14px;line-height:17px;color:#444;letter-spacing:0.363px;">Objects</div>
<div class="t" style="left:1599.4px;top:229.5px;font-size:13px;line-height:16px;color:#000;letter-spacing:-0.088px;">&#x27;Root&#x27; - UIControl</div>
<div class="t" style="left:1618.6px;top:250.5px;font-size:13px;line-height:16px;color:#000;letter-spacing:-0.054px;">Image - UIImage</div>
<div style="left:1553px;top:466px;width:362px;height:1px;background:#d4d4d4;"></div>
<div style="left:1553px;top:466px;width:1px;height:580px;background:#d4d4d4;"></div>
<div style="left:1914px;top:466px;width:1px;height:580px;background:#d4d4d4;"></div>
<div style="left:1554px;top:491px;width:360px;height:1px;background:#d4d4d4;"></div>
<div style="left:1553px;top:1045px;width:362px;height:1px;background:#d4d4d4;"></div>
<div class="t" style="left:1560px;top:471.5px;font-size:14px;line-height:17px;color:#444;letter-spacing:0.289px;">Settings</div>
<div class="t" style="left:1561.1px;top:499.7px;font-size:15px;line-height:18px;color:#000;font-weight:700;letter-spacing:-0.058px;">UIControl</div>
<div class="t" style="left:1561px;top:523.0px;font-size:13px;line-height:16px;color:#000;letter-spacing:-0.034px;">UIControl</div>
<div style="left:1558px;top:553px;width:23px;height:22px;background:#c8c8c8;"></div>
<div style="left:1890px;top:580px;width:19px;height:412px;background:#f0f0f0;"></div>
<div style="left:1890px;top:599px;width:19px;height:393px;background:#c8c8c8;"></div>
<div style="left:1558px;top:580px;width:331px;height:21px;background:#ababab;"></div>
<div class="t" style="left:1561px;top:582.5px;font-size:13.5px;line-height:16px;color:#000;">Component</div>
<div style="left:1709px;top:603px;width:6px;height:56px;background:#dcdcdc;"></div>
<div class="t" style="left:1583px;top:609.7px;font-size:13.5px;line-height:16px;color:#000;">Enabled</div>
<div style="left:1762px;top:609px;width:16px;height:16px;background:#fff;box-sizing:border-box;border:1px solid #8a8a8a;"></div>
<svg style="left:1762px;top:609px;" width="16" height="16" viewBox="0 0 16 16"><path d="M3.5 8.2 L6.6 11.3 L12.6 4.6" fill="none" stroke="#222" stroke-width="1.8"/></svg>
<div class="t" style="left:1583px;top:637.7px;font-size:13.5px;line-height:16px;color:#000;">Name</div>
<div style="left:1762px;top:634px;width:125px;height:21px;background:#fff;box-sizing:border-box;border:1px solid #dadada;"></div>
<div style="left:1558px;top:661px;width:331px;height:21px;background:#ababab;"></div>
<div class="t" style="left:1561px;top:663.5px;font-size:13.5px;line-height:16px;color:#000;">Common</div>
<div style="left:1709px;top:684px;width:6px;height:112px;background:#dcdcdc;"></div>
<div class="t" style="left:1583px;top:690.7px;font-size:13.5px;line-height:16px;color:#000;">Text</div>
<div style="left:1732px;top:687px;width:27px;height:22px;background:#f5f5f5;box-sizing:border-box;border:1px solid #c4c4c4;"></div>
<div style="left:1762px;top:687px;width:125px;height:21px;background:#fff;box-sizing:border-box;border:1px solid #dadada;"></div>
<div class="t" style="left:1583px;top:718.7px;font-size:13.5px;line-height:16px;color:#000;">Visible</div>
<div style="left:1732px;top:715px;width:27px;height:22px;background:#f5f5f5;box-sizing:border-box;border:1px solid #c4c4c4;"></div>
<div style="left:1762px;top:718px;width:16px;height:16px;background:#fff;box-sizing:border-box;border:1px solid #8a8a8a;"></div>
<svg style="left:1762px;top:718px;" width="16" height="16" viewBox="0 0 16 16"><path d="M3.5 8.2 L6.6 11.3 L12.6 4.6" fill="none" stroke="#222" stroke-width="1.8"/></svg>
<div class="t" style="left:1583px;top:746.7px;font-size:13.5px;line-height:16px;color:#000;">Read Only</div>
<div style="left:1732px;top:743px;width:27px;height:22px;background:#f5f5f5;box-sizing:border-box;border:1px solid #c4c4c4;"></div>
<div style="left:1762px;top:746px;width:16px;height:16px;background:#fff;box-sizing:border-box;border:1px solid #8a8a8a;"></div>
<div class="t" style="left:1583px;top:774.7px;font-size:13.5px;line-height:16px;color:#000;letter-spacing:-0.061px;">Can Be Selected</div>
<div style="left:1732px;top:771px;width:27px;height:22px;background:#f5f5f5;box-sizing:border-box;border:1px solid #c4c4c4;"></div>
<div style="left:1762px;top:774px;width:16px;height:16px;background:#fff;box-sizing:border-box;border:1px solid #8a8a8a;"></div>
<svg style="left:1762px;top:774px;" width="16" height="16" viewBox="0 0 16 16"><path d="M3.5 8.2 L6.6 11.3 L12.6 4.6" fill="none" stroke="#222" stroke-width="1.8"/></svg>
<div style="left:1558px;top:798px;width:331px;height:21px;background:#ababab;"></div>
<div class="t" style="left:1561px;top:800.5px;font-size:13.5px;line-height:16px;color:#000;">Layout</div>
<div style="left:1709px;top:821px;width:6px;height:140px;background:#dcdcdc;"></div>
<div class="t" style="left:1583px;top:827.7px;font-size:13.5px;line-height:16px;color:#000;">Size</div>
<div style="left:1560px;top:827px;width:17px;height:17px;background:#f5f5f5;box-sizing:border-box;border:1px solid #a0a0a0;"></div>
<div class="t" style="left:1564px;top:828.5px;font-size:11px;line-height:13px;color:#000;font-weight:400;">+</div>
<div style="left:1732px;top:824px;width:27px;height:22px;background:#f5f5f5;box-sizing:border-box;border:1px solid #c4c4c4;"></div>
<div style="left:1762px;top:824px;width:125px;height:21px;background:#fff;box-sizing:border-box;border:1px solid #dadada;"></div>
<div class="t" style="left:1765px;top:827.5px;font-size:13.5px;line-height:16px;color:#000;letter-spacing:-0.429px;">Parent 1 1</div>
<div class="t" style="left:1583px;top:855.7px;font-size:13.5px;line-height:16px;color:#000;letter-spacing:-0.128px;">Horizontal Alignment</div>
<div style="left:1732px;top:852px;width:27px;height:22px;background:#f5f5f5;box-sizing:border-box;border:1px solid #c4c4c4;"></div>
<div style="left:1762px;top:852px;width:125px;height:21px;background:#fff;box-sizing:border-box;border:1px solid #dadada;"></div>
<div class="t" style="left:1767px;top:855.0px;font-size:13.5px;line-height:16px;color:#000;">Left</div>
<svg style="left:1872px;top:861px;" width="11" height="6" viewBox="0 0 11 6"><path d="M0 0 L11 0 L5.5 5.5 Z" fill="#111"/></svg>
<div class="t" style="left:1583px;top:883.7px;font-size:13.5px;line-height:16px;color:#000;">Vertical Alignment</div>
<div style="left:1732px;top:880px;width:27px;height:22px;background:#f5f5f5;box-sizing:border-box;border:1px solid #c4c4c4;"></div>
<div style="left:1762px;top:880px;width:125px;height:21px;background:#fff;box-sizing:border-box;border:1px solid #dadada;"></div>
<div class="t" style="left:1768px;top:883.0px;font-size:13.5px;line-height:16px;color:#000;">Top</div>
<svg style="left:1872px;top:889px;" width="11" height="6" viewBox="0 0 11 6"><path d="M0 0 L11 0 L5.5 5.5 Z" fill="#111"/></svg>
<div class="t" style="left:1583px;top:911.7px;font-size:13.5px;line-height:16px;color:#000;">Margin</div>
<div style="left:1560px;top:911px;width:17px;height:17px;background:#f5f5f5;box-sizing:border-box;border:1px solid #a0a0a0;"></div>
<div class="t" style="left:1564px;top:912.5px;font-size:11px;line-height:13px;color:#000;font-weight:400;">+</div>
<div style="left:1732px;top:908px;width:27px;height:22px;background:#f5f5f5;box-sizing:border-box;border:1px solid #c4c4c4;"></div>
<div style="left:1762px;top:908px;width:125px;height:21px;background:#fff;box-sizing:border-box;border:1px solid #dadada;"></div>
<div class="t" style="left:1765px;top:911.0px;font-size:13.5px;line-height:16px;color:#000;letter-spacing:-0.344px;">Parent 0 0 0 0</div>
<div class="t" style="left:1583px;top:939.7px;font-size:13.5px;line-height:16px;color:#000;">Z Order</div>
<div style="left:1732px;top:936px;width:27px;height:22px;background:#f5f5f5;box-sizing:border-box;border:1px solid #c4c4c4;"></div>
<div style="left:1762px;top:936px;width:125px;height:21px;background:#fff;box-sizing:border-box;border:1px solid #dadada;"></div>
<div class="t" style="left:1765px;top:939.0px;font-size:13.5px;line-height:16px;color:#000;">0</div>
<div style="left:1558px;top:963px;width:331px;height:21px;background:#ababab;"></div>
<div class="t" style="left:1561px;top:965.5px;font-size:13.5px;line-height:16px;color:#000;">Appearance</div>
<div style="left:1709px;top:986px;width:6px;height:56px;background:#dcdcdc;"></div>
<div class="t" style="left:1583px;top:992.7px;font-size:13.5px;line-height:16px;color:#000;">Style</div>
<div style="left:1732px;top:989px;width:27px;height:22px;background:#f5f5f5;box-sizing:border-box;border:1px solid #c4c4c4;"></div>
<div class="t" style="left:1765px;top:992.0px;font-size:13.5px;line-height:16px;color:#000;">(Null)</div>
<div class="t" style="left:1583px;top:1020.7px;font-size:13.5px;line-height:16px;color:#000;letter-spacing:-0.029px;">Background Color</div>
<div style="left:1560px;top:1020px;width:17px;height:17px;background:#f5f5f5;box-sizing:border-box;border:1px solid #a0a0a0;"></div>
<div class="t" style="left:1564px;top:1021.5px;font-size:11px;line-height:13px;color:#000;font-weight:400;">+</div>
<div style="left:1732px;top:1017px;width:27px;height:22px;background:#f5f5f5;box-sizing:border-box;border:1px solid #c4c4c4;"></div>
<div style="left:1762px;top:1017px;width:95px;height:21px;background:#fff;box-sizing:border-box;border:1px solid #dadada;"></div>
<div class="t" style="left:1765px;top:1020.0px;font-size:13.5px;line-height:16px;color:#000;letter-spacing:-0.612px;">0 0 0 0</div>
<svg style="left:1860px;top:1018px;" width="27" height="21" viewBox="0 0 27 21"><rect width="27" height="21" fill="#3c3c3c"/><rect x="0" y="0" width="4" height="4" fill="#6a6a6a"/><rect x="0" y="8" width="4" height="4" fill="#6a6a6a"/><rect x="0" y="16" width="4" height="4" fill="#6a6a6a"/><rect x="4" y="4" width="4" height="4" fill="#6a6a6a"/><rect x="4" y="12" width="4" height="4" fill="#6a6a6a"/><rect x="4" y="20" width="4" height="4" fill="#6a6a6a"/><rect x="8" y="0" width="4" height="4" fill="#6a6a6a"/><rect x="8" y="8" width="4" height="4" fill="#6a6a6a"/><rect x="8" y="16" width="4" height="4" fill="#6a6a6a"/><rect x="12" y="4" width="4" height="4" fill="#6a6a6a"/><rect x="12" y="12" width="4" height="4" fill="#6a6a6a"/><rect x="12" y="20" width="4" height="4" fill="#6a6a6a"/><rect x="16" y="0" width="4" height="4" fill="#6a6a6a"/><rect x="16" y="8" width="4" height="4" fill="#6a6a6a"/><rect x="16" y="16" width="4" height="4" fill="#6a6a6a"/><rect x="20" y="4" width="4" height="4" fill="#6a6a6a"/><rect x="20" y="12" width="4" height="4" fill="#6a6a6a"/><rect x="20" y="20" width="4" height="4" fill="#6a6a6a"/><rect x="24" y="0" width="4" height="4" fill="#6a6a6a"/><rect x="24" y="8" width="4" height="4" fill="#6a6a6a"/><rect x="24" y="16" width="4" height="4" fill="#6a6a6a"/><rect width="27" height="21" fill="url(#gSw2)"/><defs><linearGradient id="gSw2" x1="0" y1="0" x2="0" y2="1"><stop offset="0" stop-color="#000" stop-opacity="1"/><stop offset="1" stop-color="#000" stop-opacity="0.15"/></linearGradient></defs><rect x="0.5" y="0.5" width="26" height="20" fill="none" stroke="#555"/></svg>
<svg style="left:0;top:0;" width="1920" height="1080" viewBox="0 0 1920 1080"><defs>
<linearGradient id="gPage" x1="0" y1="0" x2="0.6" y2="1"><stop offset="0" stop-color="#d9dbde"/><stop offset="1" stop-color="#ffffff"/></linearGradient>
<linearGradient id="gStar" x1="0" y1="0" x2="0" y2="1"><stop offset="0" stop-color="#ffe9a0"/><stop offset="1" stop-color="#f0b030"/></linearGradient>
<linearGradient id="gCube" x1="0" y1="0" x2="0" y2="1"><stop offset="0" stop-color="#22dd55"/><stop offset="1" stop-color="#00a020"/></linearGradient>
<linearGradient id="gFlop" x1="0" y1="0" x2="1" y2="0"><stop offset="0" stop-color="#b4b4b4"/><stop offset="0.5" stop-color="#cfcfcf"/><stop offset="1" stop-color="#b0b0b0"/></linearGradient>
<linearGradient id="gFlopB" x1="0" y1="0" x2="1" y2="0"><stop offset="0" stop-color="#2a8ad8"/><stop offset="0.5" stop-color="#6ab8f0"/><stop offset="1" stop-color="#2a8ad8"/></linearGradient>
<linearGradient id="gGreen" x1="0" y1="0" x2="0" y2="1"><stop offset="0" stop-color="#6cc070"/><stop offset="1" stop-color="#3a9a40"/></linearGradient>
<radialGradient id="gHelp" cx="0.4" cy="0.35" r="0.7"><stop offset="0" stop-color="#6aa0f8"/><stop offset="1" stop-color="#1a4fc0"/></radialGradient>
<linearGradient id="gPlug" x1="0" y1="0" x2="0" y2="1"><stop offset="0" stop-color="#9fd0f8"/><stop offset="1" stop-color="#4a98e0"/></linearGradient>
<pattern id="pChk" width="8" height="8" patternUnits="userSpaceOnUse"><rect width="8" height="8" fill="#3a3a3a"/><rect width="4" height="4" fill="#555"/><rect x="4" y="4" width="4" height="4" fill="#555"/></pattern>
<linearGradient id="gSw" x1="0" y1="0" x2="0" y2="1"><stop offset="0" stop-color="#000" stop-opacity="1"/><stop offset="1" stop-color="#000" stop-opacity="0.2"/></linearGradient>
<clipPath id="cTree"><rect x="6" y="227" width="339" height="371"/></clipPath>
</defs><path d="M9 25 L16 15.5 L19.5 11 L22.8 8.8 L25.2 11 L29 25 Z" fill="#58a838"/><path d="M9 25 L16 15.5 L19.5 11 L21 14 L18 25 Z" fill="#78c050" opacity="0.6"/><path d="M19.3 11.6 L22.8 8.8 L25.2 11 L25.8 14.2 L23.3 13 L21 15 Z" fill="#f0f0f0"/><path d="M19.6 25 V21.5 Q21.3 19 23 21.5 V25 Z" fill="#111" stroke="#e8e8e8" stroke-width="0.9"/><circle cx="13.6" cy="18.3" r="2.9" fill="#8ee04a"/><rect x="13.1" y="20.5" width="1" height="4" fill="#c09050"/><rect x="9" y="24" width="20" height="1.2" fill="#4a9a30"/><g transform="translate(51 9) scale(1)"><path d="M2.5 8.5 A6 6 0 0 1 13 5" fill="none" stroke="#f4b82a" stroke-width="2.6"/><path d="M14.8 1 L15 8 L9 6.5 Z" fill="#f4b82a"/><path d="M13.5 7.5 A6 6 0 0 1 3 11" fill="none" stroke="#b8c4d4" stroke-width="2.6"/><path d="M1.2 15 L1 8 L7 9.5 Z" fill="#b8c4d4"/></g><g transform="translate(78 9) scale(0.56)"><path d="M1 1 H16.5 L23.5 8 V27.5 H1 Z" fill="url(#gPage)" stroke="#9c9c9c" stroke-width="1.6"/><path d="M16 1.5 V8.5 H23" fill="#fff" stroke="#9c9c9c" stroke-width="1.4"/><path d="M21 15.8 L23.3 20.6 L28.3 21.2 L24.6 24.6 L25.6 29.6 L21 27.1 L16.4 29.6 L17.4 24.6 L13.7 21.2 L18.7 20.6 Z" fill="url(#gStar)" stroke="#e09a20" stroke-width="1"/></g><g transform="translate(105 9.5) scale(0.5)"><g transform="translate(0 0)"><path d="M1 16 Q1 13 4 13 L11 13 Q14.5 13 14.5 16.5 L14.5 24 Q14.5 28 10 28.5 L6 28.5 Q1 28 1 24 Z" fill="url(#gCube)"/><path d="M1.5 16 Q7.5 19 14 16" fill="none" stroke="#0a9a2a" stroke-width="0.8"/><path d="M5.3 1 H9.4 V8 H11 L7.35 15 L3.7 8 H5.3 Z" fill="#ff1010"/></g><g transform="translate(15.7 0)"><path d="M1 16 Q1 13 4 13 L11 13 Q14.5 13 14.5 16.5 L14.5 24 Q14.5 28 10 28.5 L6 28.5 Q1 28 1 24 Z" fill="url(#gCube)"/><path d="M1.5 16 Q7.5 19 14 16" fill="none" stroke="#0a9a2a" stroke-width="0.8"/><path d="M5.3 1 H9.4 V8 H11 L7.35 15 L3.7 8 H5.3 Z" fill="#ff1010"/></g></g><g transform="translate(132 9) scale(0.56)"><rect x="0.8" y="0.8" width="27" height="27.5" rx="2" fill="#8e9cb6" stroke="#7a8aa6" stroke-width="1.2"/><rect x="5" y="1.5" width="18.5" height="13.5" fill="#b8c4d6"/><rect x="6.5" y="18" width="16" height="10.5" fill="#c4cede"/><rect x="9.5" y="20.5" width="3" height="7" fill="#6a7a96"/></g><g transform="translate(159 9) scale(0.56)"><rect x="0.8" y="0.8" width="27" height="27.5" rx="2" fill="#8e9cb6" stroke="#7a8aa6" stroke-width="1.2"/><rect x="5" y="1.5" width="18.5" height="13.5" fill="#b8c4d6"/><rect x="6.5" y="18" width="16" height="10.5" fill="#c4cede"/><rect x="9.5" y="20.5" width="3" height="7" fill="#6a7a96"/></g><g transform="translate(186 8.5) scale(0.53)"><rect x="3" y="0.5" width="27" height="27" rx="2" fill="#5fb0f0" stroke="#1a78c8" stroke-width="1.2"/><rect x="0.8" y="3.2" width="26.5" height="27.5" rx="2" fill="url(#gFlopB)" stroke="#1a78c8" stroke-width="1.2"/><rect x="5" y="4" width="18" height="13.5" rx="1" fill="#f4f8fc"/><path d="M7.5 8 H21 M7.5 11 H21 M7.5 14 H21" stroke="#333" stroke-width="0.9" stroke-dasharray="3 1"/><rect x="6" y="20.5" width="15.5" height="10" rx="1" fill="#e4ecf6"/><rect x="8.5" y="22.5" width="3" height="7.5" fill="#555c66"/></g><g transform="translate(213 10) scale(0.546)"><path d="M0 1.7 L0 16.2 L14.9 16.2 L9.6 11.3 Q13 6.6 18 6.3 Q25.4 6.6 25.4 14 Q25.4 20.6 23.2 28.4 Q29.3 21.6 29.3 13.1 Q29.3 0.1 17 0 Q10 0 5 6.1 Z" fill="#4d6894"/></g><g transform="translate(240 10) scale(0.546)"><g transform="translate(29.3 0) scale(-1 1)"><path d="M0 1.7 L0 16.2 L14.9 16.2 L9.6 11.3 Q13 6.6 18 6.3 Q25.4 6.6 25.4 14 Q25.4 20.6 23.2 28.4 Q29.3 21.6 29.3 13.1 Q29.3 0.1 17 0 Q10 0 5 6.1 Z" fill="#4d6894"/></g></g><g transform="translate(268 9) scale(0.56)"><path d="M1 1 H13.5 L17 4.5 V24 H1 Z" fill="#a9b8d2" stroke="#8495b5" stroke-width="1"/><path d="M6.5 5 H19 L24 10 V29 H6.5 Z" fill="#a9b8d2" stroke="#8495b5" stroke-width="1"/><path d="M9 12 H21.5 M9 15 H21.5 M9 18 H21.5 M9 21 H21.5 M9 24 H21.5" stroke="#8495b5" stroke-width="0.9"/></g><g transform="translate(296 11) scale(0.52)"><path d="M3 3 L21 21 M21 3 L3 21" stroke="#4a5a78" stroke-width="4.6" stroke-linecap="square"/></g><g transform="translate(324 9) scale(0.58)"><path d="M1 1 L1 22 L5.5 17.5 L10 27 L14 25 L9.5 16 L16 16 Z" fill="#9fb0cf" stroke="#8a9cbd" stroke-width="1.3" stroke-linejoin="round"/></g><g transform="translate(349 9) scale(0.5)"><path d="M9 2 V17 M9 17 H26 M9 17 L2 25" fill="none" stroke="#43547a" stroke-width="2"/><path d="M9 0 L6.5 5 H11.5 Z M29 17 L24 14.5 V19.5 Z M0.5 27 L2 21.5 L5.5 25 Z" fill="#43547a"/></g><g transform="translate(375 9) scale(0.52)"><circle cx="15.5" cy="15.5" r="15" fill="none" stroke="#6e84ad" stroke-width="1.4"/><circle cx="15.5" cy="15.5" r="9.5" fill="none" stroke="#6e84ad" stroke-width="1.3"/><path d="M15 6 Q9.5 15 15.5 25 M6 15 Q15.5 19 25 15" fill="none" stroke="#6e84ad" stroke-width="1.1"/></g><g transform="translate(403 9) scale(0.55)"><path d="M13 3 V17 H26 M13 17 L3 25" fill="none" stroke="#43547a" stroke-width="1.8"/><path d="M13 3 L26 17 L3 25 Z" fill="none" stroke="#43547a" stroke-width="0.5"/><circle cx="13" cy="3" r="2.4" fill="#43547a"/><circle cx="26" cy="17" r="2.4" fill="#43547a"/><circle cx="3" cy="25" r="2.4" fill="#6a7ea6"/></g><g transform="translate(429 9) scale(0.5)"><path d="M8 12 L16 10 L24 13 L24 21 L16 24 L8 21 Z" fill="#6a7ea6"/><path d="M16 2 V17 M16 17 L29 22 M16 17 L3 24" fill="none" stroke="#43547a" stroke-width="1.8"/><path d="M16 0 L13.5 5 H18.5 Z M31 23 L26 19 L25 24 Z M1 25.5 L4 20.5 L6 24.5 Z" fill="#43547a"/></g><g transform="translate(459 10) scale(0.55)"><path d="M1 1 L21 12.5 L1 24 Z" fill="#7088b2"/></g><g transform="translate(486 10) scale(0.55)"><path d="M1 1 L21 12.5 L1 24 Z" fill="#4fb050"/></g><g transform="translate(510 9) scale(0.5)"><path d="M4 2.8 L16.5 14.3" fill="none" stroke="#c8d0dc" stroke-width="2.6" stroke-linecap="round"/><path d="M4 2.8 L16.5 14.3" fill="none" stroke="#ffffff" stroke-width="1.2" stroke-linecap="round"/><path d="M18.4 18.1 L30.4 30.1" stroke="#2a88e0" stroke-width="4.6" stroke-linecap="round"/><path d="M4 29.4 L20.5 12.8" stroke="#c8d0dc" stroke-width="6" stroke-linecap="round"/><circle cx="25" cy="7.7" r="6.8" fill="#c8d0dc"/><path d="M4 29.4 L20.5 12.8" stroke="#ffffff" stroke-width="4.2" stroke-linecap="round"/><circle cx="25" cy="7.7" r="5.9" fill="#ffffff"/><g transform="rotate(-45 25 7.7)"><rect x="26" y="4.7" width="5" height="6" fill="#c8d0dc"/><rect x="26.9" y="5.5" width="8" height="4.4" fill="#2b579a"/></g></g><rect x="538" y="13" width="10" height="2" fill="#fff"/><path d="M538.5 16.5 H547.5 L543 21 Z" fill="#fff"/><rect x="1835" y="16.5" width="11" height="2" fill="#fff"/><path d="M1870 11.5 H1878.5 V18.5 M1867.5 14 H1875.5 V21 H1867.5 Z" fill="none" stroke="#fff" stroke-width="1.6"/><path d="M1899.5 11.5 L1909.5 21.5 M1909.5 11.5 L1899.5 21.5" stroke="#fff" stroke-width="2.3"/><path d="M1899.5 52 L1904.3 47.3 L1909 52" fill="none" stroke="#fff" stroke-width="2"/><g transform="translate(8 69.5) scale(1.0)"><path d="M1 1 H16.5 L23.5 8 V27.5 H1 Z" fill="url(#gPage)" stroke="#9c9c9c" stroke-width="1.6"/><path d="M16 1.5 V8.5 H23" fill="#fff" stroke="#9c9c9c" stroke-width="1.4"/><path d="M21 15.8 L23.3 20.6 L28.3 21.2 L24.6 24.6 L25.6 29.6 L21 27.1 L16.4 29.6 L17.4 24.6 L13.7 21.2 L18.7 20.6 Z" fill="url(#gStar)" stroke="#e09a20" stroke-width="1"/></g><g transform="translate(52 71) scale(1.0)"><g transform="translate(0 0)"><path d="M1 16 Q1 13 4 13 L11 13 Q14.5 13 14.5 16.5 L14.5 24 Q14.5 28 10 28.5 L6 28.5 Q1 28 1 24 Z" fill="url(#gCube)"/><path d="M1.5 16 Q7.5 19 14 16" fill="none" stroke="#0a9a2a" stroke-width="0.8"/><path d="M5.3 1 H9.4 V8 H11 L7.35 15 L3.7 8 H5.3 Z" fill="#ff1010"/></g><g transform="translate(15.7 0)"><path d="M1 16 Q1 13 4 13 L11 13 Q14.5 13 14.5 16.5 L14.5 24 Q14.5 28 10 28.5 L6 28.5 Q1 28 1 24 Z" fill="url(#gCube)"/><path d="M1.5 16 Q7.5 19 14 16" fill="none" stroke="#0a9a2a" stroke-width="0.8"/><path d="M5.3 1 H9.4 V8 H11 L7.35 15 L3.7 8 H5.3 Z" fill="#ff1010"/></g></g><g transform="translate(108.5 70.5) scale(1.0)"><rect x="0.8" y="0.8" width="27" height="27.5" rx="2" fill="url(#gFlop)" stroke="#a3a3a3" stroke-width="1.2"/><rect x="5" y="1.5" width="18.5" height="13.5" rx="1" fill="#f2f2f2"/><path d="M8 5.5 H21 M8 8.5 H21 M8 11.5 H21" stroke="#999" stroke-width="0.9" stroke-dasharray="3 1"/><rect x="6.5" y="18" width="16" height="10.5" rx="1" fill="#f6f6f6"/><rect x="9.5" y="20.5" width="3" height="7" fill="#a8a8a8"/></g><g transform="translate(147.5 70.5) scale(1.0)"><rect x="0.8" y="0.8" width="27" height="27.5" rx="2" fill="url(#gFlop)" stroke="#a3a3a3" stroke-width="1.2"/><rect x="5" y="1.5" width="18.5" height="13.5" rx="1" fill="#f2f2f2"/><path d="M8 5.5 H21 M8 8.5 H21 M8 11.5 H21" stroke="#999" stroke-width="0.9" stroke-dasharray="3 1"/><rect x="6.5" y="18" width="16" height="10.5" rx="1" fill="#f6f6f6"/><rect x="9.5" y="20.5" width="3" height="7" fill="#a8a8a8"/></g><g transform="translate(184.5 69.5) scale(1.0)"><rect x="3" y="0.5" width="27" height="27" rx="2" fill="#5fb0f0" stroke="#1a78c8" stroke-width="1.2"/><rect x="0.8" y="3.2" width="26.5" height="27.5" rx="2" fill="url(#gFlopB)" stroke="#1a78c8" stroke-width="1.2"/><rect x="5" y="4" width="18" height="13.5" rx="1" fill="#f4f8fc"/><path d="M7.5 8 H21 M7.5 11 H21 M7.5 14 H21" stroke="#333" stroke-width="0.9" stroke-dasharray="3 1"/><rect x="6" y="20.5" width="15.5" height="10" rx="1" fill="#e4ecf6"/><rect x="8.5" y="22.5" width="3" height="7.5" fill="#555c66"/></g><g transform="translate(235 70.4) scale(1.0)"><path d="M0 1.7 L0 16.2 L14.9 16.2 L9.6 11.3 Q13 6.6 18 6.3 Q25.4 6.6 25.4 14 Q25.4 20.6 23.2 28.4 Q29.3 21.6 29.3 13.1 Q29.3 0.1 17 0 Q10 0 5 6.1 Z" fill="#a9a9a9"/></g><g transform="translate(276.8 70.4) scale(1.0)"><g transform="translate(29.3 0) scale(-1 1)"><path d="M0 1.7 L0 16.2 L14.9 16.2 L9.6 11.3 Q13 6.6 18 6.3 Q25.4 6.6 25.4 14 Q25.4 20.6 23.2 28.4 Q29.3 21.6 29.3 13.1 Q29.3 0.1 17 0 Q10 0 5 6.1 Z" fill="#a9a9a9"/></g></g><g transform="translate(322 70) scale(1.0)"><path d="M1 1 H13.5 L17 4.5 V24 H1 Z" fill="#f8f8f8" stroke="#c4c4c4" stroke-width="1"/><path d="M6.5 5 H19 L24 10 V29 H6.5 Z" fill="#f8f8f8" stroke="#c4c4c4" stroke-width="1"/><path d="M9 12 H21.5 M9 15 H21.5 M9 18 H21.5 M9 21 H21.5 M9 24 H21.5" stroke="#c4c4c4" stroke-width="0.9"/></g><g transform="translate(370 74.5) scale(1.0)"><path d="M3 3 L21 21 M21 3 L3 21" stroke="#9e9e9e" stroke-width="5" stroke-linecap="square"/></g><g transform="translate(429.5 70) scale(1.1)"><path d="M1 1 L1 22 L5.5 17.5 L10 27 L14 25 L9.5 16 L16 16 Z" fill="#dcdcdc" stroke="#bfbfbf" stroke-width="1.3" stroke-linejoin="round"/></g><g transform="translate(470.5 72) scale(1.0)"><path d="M9 2 V17 M9 17 H26 M9 17 L2 25" fill="none" stroke="#8c8c8c" stroke-width="2"/><path d="M9 0 L6.5 5 H11.5 Z M29 17 L24 14.5 V19.5 Z M0.5 27 L2 21.5 L5.5 25 Z" fill="#8c8c8c"/></g><g transform="translate(516 70) scale(1.0)"><circle cx="15.5" cy="15.5" r="15" fill="none" stroke="#a4a4a4" stroke-width="1.4"/><circle cx="15.5" cy="15.5" r="9.5" fill="none" stroke="#a4a4a4" stroke-width="1.3"/><path d="M15 6 Q9.5 15 15.5 25 M6 15 Q15.5 19 25 15" fill="none" stroke="#a4a4a4" stroke-width="1.1"/></g><g transform="translate(563 71) scale(1.0)"><path d="M13 3 V17 H26 M13 17 L3 25" fill="none" stroke="#8e8e8e" stroke-width="1.8"/><path d="M13 3 L26 17 L3 25 Z" fill="none" stroke="#8e8e8e" stroke-width="0.5"/><circle cx="13" cy="3" r="2.4" fill="#8e8e8e"/><circle cx="26" cy="17" r="2.4" fill="#8e8e8e"/><circle cx="3" cy="25" r="2.4" fill="#bbb"/></g><g transform="translate(602 72) scale(1.0)"><path d="M8 12 L16 10 L24 13 L24 21 L16 24 L8 21 Z" fill="#d6d6d6"/><path d="M16 2 V17 M16 17 L29 22 M16 17 L3 24" fill="none" stroke="#8e8e8e" stroke-width="1.8"/><path d="M16 0 L13.5 5 H18.5 Z M31 23 L26 19 L25 24 Z M1 25.5 L4 20.5 L6 24.5 Z" fill="#8e8e8e"/></g><g transform="translate(657 74) scale(1.0)"><path d="M1 1 L21 12.5 L1 24 Z" fill="#bcbcbc"/></g><g transform="translate(700.5 74) scale(1.0)"><path d="M1 1 L21 12.5 L1 24 Z" fill="url(#gGreen)"/></g><g transform="translate(756 69) scale(1.0)"><path d="M4 2.8 L16.5 14.3" fill="none" stroke="#8a8a8a" stroke-width="2.6" stroke-linecap="round"/><path d="M4 2.8 L16.5 14.3" fill="none" stroke="#f4f4f4" stroke-width="1.2" stroke-linecap="round"/><path d="M18.4 18.1 L30.4 30.1" stroke="#2a7ad0" stroke-width="4.6" stroke-linecap="round"/><path d="M4 29.4 L20.5 12.8" stroke="#8a8a8a" stroke-width="6" stroke-linecap="round"/><circle cx="25" cy="7.7" r="6.8" fill="#8a8a8a"/><path d="M4 29.4 L20.5 12.8" stroke="#f4f4f4" stroke-width="4.2" stroke-linecap="round"/><circle cx="25" cy="7.7" r="5.9" fill="#f4f4f4"/><g transform="rotate(-45 25 7.7)"><rect x="26" y="4.7" width="5" height="6" fill="#8a8a8a"/><rect x="26.9" y="5.5" width="8" height="4.4" fill="#f0f0f0"/></g></g><path d="M826.6 70.6 L829 73.2 M851.9 96.5 L854 98" stroke="#888" stroke-width="1.6" stroke-linecap="round"/><circle cx="828.6" cy="73.4" r="1.6" fill="#aaa"/><circle cx="851.8" cy="96.2" r="1.6" fill="#aaa"/><path d="M842.5 80.9 L845 84.6 M837.5 85.9 L840 89.6" stroke="#909090" stroke-width="2.2"/><path d="M828.1 76.5 L830.6 72.1 L838.75 72.1 L842.8 75.6 L831.25 86.5 L828.1 82.75 Z" fill="url(#gPlug)" stroke="#3a88d0" stroke-width="0.9"/><path d="M829.5 82 L840.5 74.9" stroke="#3a78c0" stroke-width="0.7"/><path d="M838.75 92.4 L849.4 82.1 L852.5 85.6 L852.8 93.4 L849.4 96.5 L841.25 96.5 Z" fill="url(#gPlug)" stroke="#3a88d0" stroke-width="0.9"/><path d="M840 93 L850.6 83.4" stroke="#3a78c0" stroke-width="0.7"/><g transform="translate(875.5 69.5) scale(1.0)"><rect x="1.5" y="10" width="27" height="20" fill="#f3c27a" stroke="#c98a30" stroke-width="1.2"/><path d="M2 22 H28 M4 23 V29.5 M7 23 V29.5 M10 23 V29.5 M13 23 V29.5 M16 23 V29.5 M19 23 V29.5 M22 23 V29.5 M25 23 V29.5" stroke="#c98a30" stroke-width="0.7"/><rect x="4" y="15" width="10.5" height="6" fill="#e02020"/><rect x="15.5" y="15" width="10.5" height="6" fill="#40c020"/><path d="M3 1.5 H27 L29.5 11 H0.5 Z" fill="#ffffff" stroke="#4a90d8" stroke-width="1"/><path d="M3 1.5 H7 L6 11 H0.5 Z M11 1.5 H15 L15 11 H11 Z M19 1.5 H23 L24 11 H19.5 Z" fill="#3a88e0"/><path d="M27 1.5 L29.5 11 H26 Z" fill="#3a88e0"/></g><g transform="translate(931.5 69.5) scale(1.0)"><circle cx="15.5" cy="15.5" r="15" fill="url(#gHelp)" stroke="#1a3f9a" stroke-width="0.8"/><path d="M10.5 11.5 Q10.5 6 15.8 6 Q21 6 21 11 Q21 14 17.5 15.8 Q16.2 16.6 16.2 18.8" fill="none" stroke="#fff" stroke-width="3.6"/><circle cx="16.2" cy="24" r="2.3" fill="#fff"/></g><g transform="translate(980 71) scale(1.0)"><path d="M4.5 1 L9 7 H6.5 V27.5 H2.5 V7 H0 Z" fill="#8cc8f8" stroke="#3a8ad8" stroke-width="0.9"/><rect x="12" y="2" width="18" height="4.5" fill="#aee070" stroke="#5aa030" stroke-width="0.9"/><rect x="12" y="9" width="13" height="4.5" fill="#aee070" stroke="#5aa030" stroke-width="0.9"/><rect x="12" y="16" width="8.5" height="4.5" fill="#aee070" stroke="#5aa030" stroke-width="0.9"/><rect x="12" y="23" width="4.5" height="4.5" fill="#aee070" stroke="#5aa030" stroke-width="0.9"/></g><path d="M314.5 186 H322.5 L318.5 190.5 Z" fill="#fff"/><rect x="334.5" y="182.5" width="4.5" height="6.5" fill="none" stroke="#fff" stroke-width="1.2"/><rect x="337.5" y="182" width="1.5" height="7" fill="#fff"/><rect x="333" y="189" width="8" height="1.4" fill="#fff"/><rect x="336.3" y="190" width="1.4" height="3" fill="#fff"/><path d="M350 183 L359.5 192.5 M359.5 183 L350 192.5" stroke="#fff" stroke-width="2"/><path d="M314 864 H322 L318 868.5 Z" fill="#333"/><rect x="334.5" y="860.5" width="4.5" height="6.5" fill="none" stroke="#333" stroke-width="1.2"/><rect x="337.5" y="860" width="1.5" height="7" fill="#333"/><rect x="333" y="867" width="8" height="1.4" fill="#333"/><rect x="336.3" y="868" width="1.4" height="3" fill="#333"/><path d="M350 861.5 L359.5 871.0 M359.5 861.5 L350 871.0" stroke="#333" stroke-width="2"/><path d="M1862.5 187 H1870.5 L1866.5 191.5 Z" fill="#333"/><rect x="1882.0" y="182.5" width="4.5" height="6.5" fill="none" stroke="#333" stroke-width="1.2"/><rect x="1885.0" y="182" width="1.5" height="7" fill="#333"/><rect x="1880.5" y="189" width="8" height="1.4" fill="#333"/><rect x="1883.8" y="190" width="1.4" height="3" fill="#333"/><path d="M1898 183.5 L1907.5 193.0 M1907.5 183.5 L1898 193.0" stroke="#333" stroke-width="2"/><path d="M1862 477 H1870 L1866 481.5 Z" fill="#333"/><rect x="1882.0" y="473.5" width="4.5" height="6.5" fill="none" stroke="#333" stroke-width="1.2"/><rect x="1885.0" y="473" width="1.5" height="7" fill="#333"/><rect x="1880.5" y="480" width="8" height="1.4" fill="#333"/><rect x="1883.8" y="481" width="1.4" height="3" fill="#333"/><path d="M1897.5 473.5 L1907.0 483.0 M1907.0 473.5 L1897.5 483.0" stroke="#333" stroke-width="2"/><g transform="translate(9 205) scale(0.5)"><path d="M4 2.8 L16.5 14.3" fill="none" stroke="#8a8a8a" stroke-width="2.6" stroke-linecap="round"/><path d="M4 2.8 L16.5 14.3" fill="none" stroke="#fafafa" stroke-width="1.2" stroke-linecap="round"/><path d="M18.4 18.1 L30.4 30.1" stroke="#2a78c8" stroke-width="4.6" stroke-linecap="round"/><path d="M4 29.4 L20.5 12.8" stroke="#8a8a8a" stroke-width="6" stroke-linecap="round"/><circle cx="25" cy="7.7" r="6.8" fill="#8a8a8a"/><path d="M4 29.4 L20.5 12.8" stroke="#fafafa" stroke-width="4.2" stroke-linecap="round"/><circle cx="25" cy="7.7" r="5.9" fill="#fafafa"/><g transform="rotate(-45 25 7.7)"><rect x="26" y="4.7" width="5" height="6" fill="#8a8a8a"/><rect x="26.9" y="5.5" width="8" height="4.4" fill="#f0f0f0"/></g></g><rect x="31" y="205" width="7" height="7" fill="#3cbf3c" stroke="#2a8a2a" stroke-width="0.6"/><path d="M43 205 L47.5 212 H38.5 Z" fill="#3a9ae8"/><circle cx="34.5" cy="217" r="3.8" fill="#e83a2a"/><path d="M43 212.5 L47 216.5 L43 220.5 L39 216.5 Z" fill="#f4a830"/><path d="M49 213 H54 L51.5 215.8 Z" fill="#222"/><rect x="61" y="206" width="1" height="17" fill="#d4d4d4"/><path d="M68 206 H76 L79 209 V220 H68 Z" fill="#e6e6e6" stroke="#c2c2c2" stroke-width="1"/><path d="M73 218 L82 210" stroke="#c2c2c2" stroke-width="3"/><rect x="90" y="206" width="1" height="17" fill="#d4d4d4"/><path d="M97 207 H102 V220 H97 Z" fill="#e6e6e6" stroke="#c2c2c2" stroke-width="1"/><path d="M101 206 H107 L110 209 V219 H101 Z" fill="#e6e6e6" stroke="#c2c2c2" stroke-width="1"/><circle cx="107" cy="211" r="3.2" fill="#c2c2c2"/><path d="M120 206 H128 L131 209 V220 H120 Z" fill="#e6e6e6" stroke="#c2c2c2" stroke-width="1"/><path d="M130.5 213 L131.8 215.6 L134.5 216 L132.5 217.9 L133 220.6 L130.5 219.3 L128 220.6 L128.5 217.9 L126.5 216 L129.2 215.6 Z" fill="#e6e6e6" stroke="#c2c2c2" stroke-width="0.9"/><path d="M145 208.5 L154 217.5 M154 208.5 L145 217.5" stroke="#a9a9a9" stroke-width="2.8"/><rect x="166.3" y="208.3" width="13.4" height="9.4" fill="#e4e4e4" stroke="#9a9a9a" stroke-width="1.6"/><path d="M168.3 210.2 H170.7 M169.5 210.2 V215.8 M168.3 215.8 H170.7" stroke="#888" stroke-width="0.9"/><path d="M192.2 205.5 L192.2 214 M189.5 207 Q193 211 196.5 213.5" stroke="#b0b0b0" stroke-width="1" fill="none"/><ellipse cx="192" cy="217.5" rx="1.3" ry="2.6" fill="none" stroke="#a8a8a8" stroke-width="1"/><ellipse cx="198.2" cy="216.2" rx="1.8" ry="1.6" fill="none" stroke="#a8a8a8" stroke-width="1" transform="rotate(35 198.2 216.2)"/><path d="M212.0 205.5 H218.5 L220.5 207.5 V217 H212.0 Z" fill="#ececec" stroke="#c2c2c2" stroke-width="1"/><path d="M216.0 208.5 H222.5 L225.5 211.5 V220.5 H216.0 Z" fill="#ececec" stroke="#c2c2c2" stroke-width="1"/><path d="M218.0 214.5 H224.0 M218.0 216.5 H224.0 M218.0 218.5 H224.0" stroke="#c4c4c4" stroke-width="1" shape-rendering="crispEdges"/><rect x="234.5" y="206.5" width="9" height="11" fill="#e4e4e4" stroke="#c2c2c2" stroke-width="1"/><rect x="237" y="205" width="4" height="2.5" fill="#c2c2c2"/><path d="M239.5 210.5 H245.5 L248.5 213.5 V220.5 H239.5 Z" fill="#ececec" stroke="#c2c2c2" stroke-width="1"/><path d="M241.5 215.5 H247 M241.5 217.5 H247" stroke="#c4c4c4" stroke-width="1" shape-rendering="crispEdges"/><g transform="translate(1557 205) scale(0.5)"><path d="M4 2.8 L16.5 14.3" fill="none" stroke="#8a8a8a" stroke-width="2.6" stroke-linecap="round"/><path d="M4 2.8 L16.5 14.3" fill="none" stroke="#fafafa" stroke-width="1.2" stroke-linecap="round"/><path d="M18.4 18.1 L30.4 30.1" stroke="#2a78c8" stroke-width="4.6" stroke-linecap="round"/><path d="M4 29.4 L20.5 12.8" stroke="#8a8a8a" stroke-width="6" stroke-linecap="round"/><circle cx="25" cy="7.7" r="6.8" fill="#8a8a8a"/><path d="M4 29.4 L20.5 12.8" stroke="#fafafa" stroke-width="4.2" stroke-linecap="round"/><circle cx="25" cy="7.7" r="5.9" fill="#fafafa"/><g transform="rotate(-45 25 7.7)"><rect x="26" y="4.7" width="5" height="6" fill="#8a8a8a"/><rect x="26.9" y="5.5" width="8" height="4.4" fill="#f0f0f0"/></g></g><g transform="translate(1580 205)"><path d="M0.1 5.55 L5.5 0.05 L8.85 3.4 L3.45 8.8 Z" fill="#d2b028" stroke="#a68a12" stroke-width="0.7"/><path d="M6.6 6.6 H7.6 V11.45 H10.1" fill="none" stroke="#858585" stroke-width="0.9"/><path d="M8.05 7.4 L11.5 4 L14.05 6.5 L10.6 9.6 Z" fill="#52cdf8" stroke="#1a8ac8" stroke-width="0.7"/><path d="M9.25 12.5 L12.5 9.2 L14.95 11.45 L11.5 14.8 Z" fill="#f48ad6" stroke="#b84a98" stroke-width="0.7"/></g><rect x="1603" y="206" width="1" height="17" fill="#d4d4d4"/><path d="M1610 206 H1618 L1621 209 V220 H1610 Z" fill="#e6e6e6" stroke="#c2c2c2" stroke-width="1"/><path d="M1615 218 L1624 210" stroke="#c2c2c2" stroke-width="3"/><rect x="1636.5" y="206.5" width="12" height="9" fill="#e6e6e6" stroke="#c2c2c2" stroke-width="1"/><rect x="1633.5" y="209.5" width="12" height="10" fill="#e6e6e6" stroke="#c2c2c2" stroke-width="1"/><rect x="1633.5" y="209.5" width="12" height="2.5" fill="#c2c2c2"/><rect x="1655" y="206" width="1" height="17" fill="#d4d4d4"/><path d="M1662 206 H1670 L1673 209 V220 H1662 Z" fill="#e6e6e6" stroke="#c2c2c2" stroke-width="1"/><path d="M1672.5 213 L1673.8 215.6 L1676.5 216 L1674.5 217.9 L1675 220.6 L1672.5 219.3 L1670 220.6 L1670.5 217.9 L1668.5 216 L1671.2 215.6 Z" fill="#e6e6e6" stroke="#c2c2c2" stroke-width="0.9"/><path d="M1687.5 208.5 L1696.5 217.5 M1696.5 208.5 L1687.5 217.5" stroke="#a9a9a9" stroke-width="2.8"/><rect x="1708.8" y="208.3" width="13.4" height="9.4" fill="#e4e4e4" stroke="#9a9a9a" stroke-width="1.6"/><path d="M1710.8 210.2 H1713.2 M1712 210.2 V215.8 M1710.8 215.8 H1713.2" stroke="#888" stroke-width="0.9"/><path d="M1731.5 205.5 H1738 L1740 207.5 V217 H1731.5 Z" fill="#ececec" stroke="#c2c2c2" stroke-width="1"/><path d="M1735.5 208.5 H1742 L1745 211.5 V220.5 H1735.5 Z" fill="#ececec" stroke="#c2c2c2" stroke-width="1"/><path d="M1737.5 214.5 H1743.5 M1737.5 216.5 H1743.5 M1737.5 218.5 H1743.5" stroke="#c4c4c4" stroke-width="1" shape-rendering="crispEdges"/><path d="M1760.5 206 L1767.5 213 H1763.5 V220 H1757.5 V213 H1753.5 Z" fill="#b4b4b4"/><path d="M1783.5 220 L1790.5 213 H1786.5 V206 H1780.5 V213 H1776.5 Z" fill="#b4b4b4"/><path d="M1804.2 205.5 L1804.2 214 M1801.5 207 Q1805 211 1808.5 213.5" stroke="#b0b0b0" stroke-width="1" fill="none"/><ellipse cx="1804" cy="217.5" rx="1.3" ry="2.6" fill="none" stroke="#a8a8a8" stroke-width="1"/><ellipse cx="1810.2" cy="216.2" rx="1.8" ry="1.6" fill="none" stroke="#a8a8a8" stroke-width="1" transform="rotate(35 1810.2 216.2)"/><path d="M1823.5 205.5 H1830 L1832 207.5 V217 H1823.5 Z" fill="#ececec" stroke="#c2c2c2" stroke-width="1"/><path d="M1827.5 208.5 H1834 L1837 211.5 V220.5 H1827.5 Z" fill="#ececec" stroke="#c2c2c2" stroke-width="1"/><path d="M1829.5 214.5 H1835.5 M1829.5 216.5 H1835.5 M1829.5 218.5 H1835.5" stroke="#c4c4c4" stroke-width="1" shape-rendering="crispEdges"/><rect x="1846.0" y="206.5" width="9" height="11" fill="#e4e4e4" stroke="#c2c2c2" stroke-width="1"/><rect x="1848.5" y="205" width="4" height="2.5" fill="#c2c2c2"/><path d="M1851.0 210.5 H1857.0 L1860.0 213.5 V220.5 H1851.0 Z" fill="#ececec" stroke="#c2c2c2" stroke-width="1"/><path d="M1853.0 215.5 H1858.5 M1853.0 217.5 H1858.5" stroke="#c4c4c4" stroke-width="1" shape-rendering="crispEdges"/><g clip-path="url(#cTree)"><rect x="13.5" y="233.5" width="8" height="8" rx="1" fill="#fcfcfc" stroke="#8a8a8a" stroke-width="1"/><rect x="15" y="237" width="5" height="1" fill="#3a4a8a"/><rect x="30.6" y="230.2" width="11.2" height="13.4" rx="0.6" fill="#f9dc5c" stroke="#d9a030" stroke-width="1.2"/><rect x="31.6" y="231.2" width="9.2" height="11.4" fill="none" stroke="#fff8b0" stroke-width="0.8"/><rect x="40.4" y="238.1" width="2.4" height="5.5" rx="0.5" fill="#fff4a0" stroke="#d9a030" stroke-width="1.1"/><rect x="32.5" y="254.5" width="8" height="8" rx="1" fill="#fcfcfc" stroke="#8a8a8a" stroke-width="1"/><rect x="34" y="258" width="5" height="1" fill="#3a4a8a"/><rect x="36" y="256" width="1" height="5" fill="#3a4a8a"/><rect x="49.6" y="251.2" width="11.2" height="13.4" rx="0.6" fill="#f9dc5c" stroke="#d9a030" stroke-width="1.2"/><rect x="50.6" y="252.2" width="9.2" height="11.4" fill="none" stroke="#fff8b0" stroke-width="0.8"/><rect x="59.4" y="259.1" width="2.4" height="5.5" rx="0.5" fill="#fff4a0" stroke="#d9a030" stroke-width="1.1"/><rect x="32.5" y="275.5" width="8" height="8" rx="1" fill="#fcfcfc" stroke="#8a8a8a" stroke-width="1"/><rect x="34" y="279" width="5" height="1" fill="#3a4a8a"/><rect x="36" y="277" width="1" height="5" fill="#3a4a8a"/><rect x="49.6" y="272.2" width="11.2" height="13.4" rx="0.6" fill="#f9dc5c" stroke="#d9a030" stroke-width="1.2"/><rect x="50.6" y="273.2" width="9.2" height="11.4" fill="none" stroke="#fff8b0" stroke-width="0.8"/><rect x="59.4" y="280.1" width="2.4" height="5.5" rx="0.5" fill="#fff4a0" stroke="#d9a030" stroke-width="1.1"/><rect x="32.5" y="296.5" width="8" height="8" rx="1" fill="#fcfcfc" stroke="#8a8a8a" stroke-width="1"/><rect x="34" y="300" width="5" height="1" fill="#3a4a8a"/><rect x="49.6" y="293.2" width="11.2" height="13.4" rx="0.6" fill="#f9dc5c" stroke="#d9a030" stroke-width="1.2"/><rect x="50.6" y="294.2" width="9.2" height="11.4" fill="none" stroke="#fff8b0" stroke-width="0.8"/><rect x="59.4" y="301.1" width="2.4" height="5.5" rx="0.5" fill="#fff4a0" stroke="#d9a030" stroke-width="1.1"/><g transform="translate(67 313)"><path d="M0.1 5.55 L5.5 0.05 L8.85 3.4 L3.45 8.8 Z" fill="#d2b028" stroke="#a68a12" stroke-width="0.7"/><path d="M6.6 6.6 H7.6 V11.45 H10.1" fill="none" stroke="#858585" stroke-width="0.9"/><path d="M8.05 7.4 L11.5 4 L14.05 6.5 L10.6 9.6 Z" fill="#52cdf8" stroke="#1a8ac8" stroke-width="0.7"/><path d="M9.25 12.5 L12.5 9.2 L14.95 11.45 L11.5 14.8 Z" fill="#f48ad6" stroke="#b84a98" stroke-width="0.7"/></g><g transform="translate(67 334)"><path d="M0.1 5.55 L5.5 0.05 L8.85 3.4 L3.45 8.8 Z" fill="#d2b028" stroke="#a68a12" stroke-width="0.7"/><path d="M6.6 6.6 H7.6 V11.45 H10.1" fill="none" stroke="#858585" stroke-width="0.9"/><path d="M8.05 7.4 L11.5 4 L14.05 6.5 L10.6 9.6 Z" fill="#52cdf8" stroke="#1a8ac8" stroke-width="0.7"/><path d="M9.25 12.5 L12.5 9.2 L14.95 11.45 L11.5 14.8 Z" fill="#f48ad6" stroke="#b84a98" stroke-width="0.7"/></g><g transform="translate(67 355)"><path d="M0.1 5.55 L5.5 0.05 L8.85 3.4 L3.45 8.8 Z" fill="#d2b028" stroke="#a68a12" stroke-width="0.7"/><path d="M6.6 6.6 H7.6 V11.45 H10.1" fill="none" stroke="#858585" stroke-width="0.9"/><path d="M8.05 7.4 L11.5 4 L14.05 6.5 L10.6 9.6 Z" fill="#52cdf8" stroke="#1a8ac8" stroke-width="0.7"/><path d="M9.25 12.5 L12.5 9.2 L14.95 11.45 L11.5 14.8 Z" fill="#f48ad6" stroke="#b84a98" stroke-width="0.7"/></g><g transform="translate(67 376)"><path d="M0.1 5.55 L5.5 0.05 L8.85 3.4 L3.45 8.8 Z" fill="#d2b028" stroke="#a68a12" stroke-width="0.7"/><path d="M6.6 6.6 H7.6 V11.45 H10.1" fill="none" stroke="#858585" stroke-width="0.9"/><path d="M8.05 7.4 L11.5 4 L14.05 6.5 L10.6 9.6 Z" fill="#52cdf8" stroke="#1a8ac8" stroke-width="0.7"/><path d="M9.25 12.5 L12.5 9.2 L14.95 11.45 L11.5 14.8 Z" fill="#f48ad6" stroke="#b84a98" stroke-width="0.7"/></g><g transform="translate(67 397)"><path d="M0.1 5.55 L5.5 0.05 L8.85 3.4 L3.45 8.8 Z" fill="#d2b028" stroke="#a68a12" stroke-width="0.7"/><path d="M6.6 6.6 H7.6 V11.45 H10.1" fill="none" stroke="#858585" stroke-width="0.9"/><path d="M8.05 7.4 L11.5 4 L14.05 6.5 L10.6 9.6 Z" fill="#52cdf8" stroke="#1a8ac8" stroke-width="0.7"/><path d="M9.25 12.5 L12.5 9.2 L14.95 11.45 L11.5 14.8 Z" fill="#f48ad6" stroke="#b84a98" stroke-width="0.7"/></g><g transform="translate(67 418)"><path d="M0.1 5.55 L5.5 0.05 L8.85 3.4 L3.45 8.8 Z" fill="#d2b028" stroke="#a68a12" stroke-width="0.7"/><path d="M6.6 6.6 H7.6 V11.45 H10.1" fill="none" stroke="#858585" stroke-width="0.9"/><path d="M8.05 7.4 L11.5 4 L14.05 6.5 L10.6 9.6 Z" fill="#52cdf8" stroke="#1a8ac8" stroke-width="0.7"/><path d="M9.25 12.5 L12.5 9.2 L14.95 11.45 L11.5 14.8 Z" fill="#f48ad6" stroke="#b84a98" stroke-width="0.7"/></g><g transform="translate(67 439)"><path d="M0.1 5.55 L5.5 0.05 L8.85 3.4 L3.45 8.8 Z" fill="#d2b028" stroke="#a68a12" stroke-width="0.7"/><path d="M6.6 6.6 H7.6 V11.45 H10.1" fill="none" stroke="#858585" stroke-width="0.9"/><path d="M8.05 7.4 L11.5 4 L14.05 6.5 L10.6 9.6 Z" fill="#52cdf8" stroke="#1a8ac8" stroke-width="0.7"/><path d="M9.25 12.5 L12.5 9.2 L14.95 11.45 L11.5 14.8 Z" fill="#f48ad6" stroke="#b84a98" stroke-width="0.7"/></g><g transform="translate(67 460)"><path d="M0.1 5.55 L5.5 0.05 L8.85 3.4 L3.45 8.8 Z" fill="#d2b028" stroke="#a68a12" stroke-width="0.7"/><path d="M6.6 6.6 H7.6 V11.45 H10.1" fill="none" stroke="#858585" stroke-width="0.9"/><path d="M8.05 7.4 L11.5 4 L14.05 6.5 L10.6 9.6 Z" fill="#52cdf8" stroke="#1a8ac8" stroke-width="0.7"/><path d="M9.25 12.5 L12.5 9.2 L14.95 11.45 L11.5 14.8 Z" fill="#f48ad6" stroke="#b84a98" stroke-width="0.7"/></g><g transform="translate(67 481)"><path d="M0.1 5.55 L5.5 0.05 L8.85 3.4 L3.45 8.8 Z" fill="#d2b028" stroke="#a68a12" stroke-width="0.7"/><path d="M6.6 6.6 H7.6 V11.45 H10.1" fill="none" stroke="#858585" stroke-width="0.9"/><path d="M8.05 7.4 L11.5 4 L14.05 6.5 L10.6 9.6 Z" fill="#52cdf8" stroke="#1a8ac8" stroke-width="0.7"/><path d="M9.25 12.5 L12.5 9.2 L14.95 11.45 L11.5 14.8 Z" fill="#f48ad6" stroke="#b84a98" stroke-width="0.7"/></g><g transform="translate(67 502)"><path d="M0.1 5.55 L5.5 0.05 L8.85 3.4 L3.45 8.8 Z" fill="#d2b028" stroke="#a68a12" stroke-width="0.7"/><path d="M6.6 6.6 H7.6 V11.45 H10.1" fill="none" stroke="#858585" stroke-width="0.9"/><path d="M8.05 7.4 L11.5 4 L14.05 6.5 L10.6 9.6 Z" fill="#52cdf8" stroke="#1a8ac8" stroke-width="0.7"/><path d="M9.25 12.5 L12.5 9.2 L14.95 11.45 L11.5 14.8 Z" fill="#f48ad6" stroke="#b84a98" stroke-width="0.7"/></g><g transform="translate(67 523)"><path d="M0.1 5.55 L5.5 0.05 L8.85 3.4 L3.45 8.8 Z" fill="#d2b028" stroke="#a68a12" stroke-width="0.7"/><path d="M6.6 6.6 H7.6 V11.45 H10.1" fill="none" stroke="#858585" stroke-width="0.9"/><path d="M8.05 7.4 L11.5 4 L14.05 6.5 L10.6 9.6 Z" fill="#52cdf8" stroke="#1a8ac8" stroke-width="0.7"/><path d="M9.25 12.5 L12.5 9.2 L14.95 11.45 L11.5 14.8 Z" fill="#f48ad6" stroke="#b84a98" stroke-width="0.7"/></g><g transform="translate(67 544)"><path d="M0.1 5.55 L5.5 0.05 L8.85 3.4 L3.45 8.8 Z" fill="#d2b028" stroke="#a68a12" stroke-width="0.7"/><path d="M6.6 6.6 H7.6 V11.45 H10.1" fill="none" stroke="#858585" stroke-width="0.9"/><path d="M8.05 7.4 L11.5 4 L14.05 6.5 L10.6 9.6 Z" fill="#52cdf8" stroke="#1a8ac8" stroke-width="0.7"/><path d="M9.25 12.5 L12.5 9.2 L14.95 11.45 L11.5 14.8 Z" fill="#f48ad6" stroke="#b84a98" stroke-width="0.7"/></g><g transform="translate(67 565)"><path d="M0.1 5.55 L5.5 0.05 L8.85 3.4 L3.45 8.8 Z" fill="#d2b028" stroke="#a68a12" stroke-width="0.7"/><path d="M6.6 6.6 H7.6 V11.45 H10.1" fill="none" stroke="#858585" stroke-width="0.9"/><path d="M8.05 7.4 L11.5 4 L14.05 6.5 L10.6 9.6 Z" fill="#52cdf8" stroke="#1a8ac8" stroke-width="0.7"/><path d="M9.25 12.5 L12.5 9.2 L14.95 11.45 L11.5 14.8 Z" fill="#f48ad6" stroke="#b84a98" stroke-width="0.7"/></g><g transform="translate(67 586)"><path d="M0.1 5.55 L5.5 0.05 L8.85 3.4 L3.45 8.8 Z" fill="#d2b028" stroke="#a68a12" stroke-width="0.7"/><path d="M6.6 6.6 H7.6 V11.45 H10.1" fill="none" stroke="#858585" stroke-width="0.9"/><path d="M8.05 7.4 L11.5 4 L14.05 6.5 L10.6 9.6 Z" fill="#52cdf8" stroke="#1a8ac8" stroke-width="0.7"/><path d="M9.25 12.5 L12.5 9.2 L14.95 11.45 L11.5 14.8 Z" fill="#f48ad6" stroke="#b84a98" stroke-width="0.7"/></g></g><rect x="1561.5" y="233.5" width="8" height="8" rx="1" fill="#fcfcfc" stroke="#8a8a8a" stroke-width="1"/><rect x="1563" y="237" width="5" height="1" fill="#3a4a8a"/><path transform="translate(1578 229)" d="M0.5 3.5 H4 V0.5 H7.6 V3.5 H11 V6 H14 V10 H11 V14 H7.2 V10.5 H4.3 V14 H0.5 Z" fill="#fdd44a" stroke="#e08a38" stroke-width="1.2" stroke-linejoin="round"/><path transform="translate(1578 229)" d="M3 5 H9.5 V9.5 H3 Z" fill="#ffc020" opacity="0.7"/><path transform="translate(1597 250)" d="M0.5 3.5 H4 V0.5 H7.6 V3.5 H11 V6 H14 V10 H11 V14 H7.2 V10.5 H4.3 V14 H0.5 Z" fill="#fdd44a" stroke="#e08a38" stroke-width="1.2" stroke-linejoin="round"/><path transform="translate(1597 250)" d="M3 5 H9.5 V9.5 H3 Z" fill="#ffc020" opacity="0.7"/><g transform="translate(1887.5 501)"><path d="M0.1 5.55 L5.5 0.05 L8.85 3.4 L3.45 8.8 Z" fill="#d2b028" stroke="#a68a12" stroke-width="0.7"/><path d="M6.6 6.6 H7.6 V11.45 H10.1" fill="none" stroke="#858585" stroke-width="0.9"/><path d="M8.05 7.4 L11.5 4 L14.05 6.5 L10.6 9.6 Z" fill="#52cdf8" stroke="#1a8ac8" stroke-width="0.7"/><path d="M9.25 12.5 L12.5 9.2 L14.95 11.45 L11.5 14.8 Z" fill="#f48ad6" stroke="#b84a98" stroke-width="0.7"/></g><rect x="1561.5" y="557" width="15.3" height="12.8" rx="1.5" fill="#4a90d8" stroke="#3a78c0" stroke-width="0.8"/><rect x="1562.4" y="560" width="13.6" height="9" fill="#fbfbfb"/><circle cx="1563.6" cy="561.3" r="0.75" fill="#22aa22"/><circle cx="1563.6" cy="563.5" r="0.75" fill="#cc4444"/><circle cx="1563.6" cy="565.5" r="0.75" fill="#4a80f0"/><circle cx="1563.6" cy="567.4" r="0.75" fill="#444"/><path d="M1565 563.5 H1575 M1565 565.5 H1575 M1565 567.4 H1575" stroke="#bbb" stroke-width="0.7"/><path d="M1565 561.8 L1566.8 558 L1569 556.2 L1576.8 556.2 L1577 560.5 L1571.5 563.8 Z" fill="#e0a868" stroke="#a86a30" stroke-width="0.5"/><path d="M1590.2 557 L1597.8 557 L1593.8 562 L1597 562.2 L1588.5 570.8 L1591.5 564.5 L1587.2 564.5 Z" fill="#f6d030" stroke="#c89a10" stroke-width="0.6"/><path d="M349.5 240 L354.5 235 L359.5 240" fill="none" stroke="#555" stroke-width="2"/><path d="M349.5 585 L354.5 590 L359.5 585" fill="none" stroke="#555" stroke-width="2"/><path d="M1895 591 L1900 586 L1905 591" fill="none" stroke="#555" stroke-width="2"/><path d="M1895 1026 L1900 1031 L1905 1026" fill="none" stroke="#555" stroke-width="2"/><path d="M16.5 610.5 L23 617 H19.5 V625 H13.5 V617 H10 Z" fill="#4ab0f0" stroke="#2a88d0" stroke-width="0.8"/><path d="M76.5 616 L79.5 618.8 L76.5 621.5 Z M134 616 L137 618.8 L134 621.5 Z" fill="#555"/><path d="M513.5 185.5 L522.0 194 M522.0 185.5 L513.5 194" stroke="#222" stroke-width="1.9"/><path d="M657.5 185.5 L666.0 194 M666.0 185.5 L657.5 194" stroke="#222" stroke-width="1.9"/><path d="M765.5 185.5 L774.0 194 M774.0 185.5 L765.5 194" stroke="#222" stroke-width="1.9"/></svg>
</body></html>
